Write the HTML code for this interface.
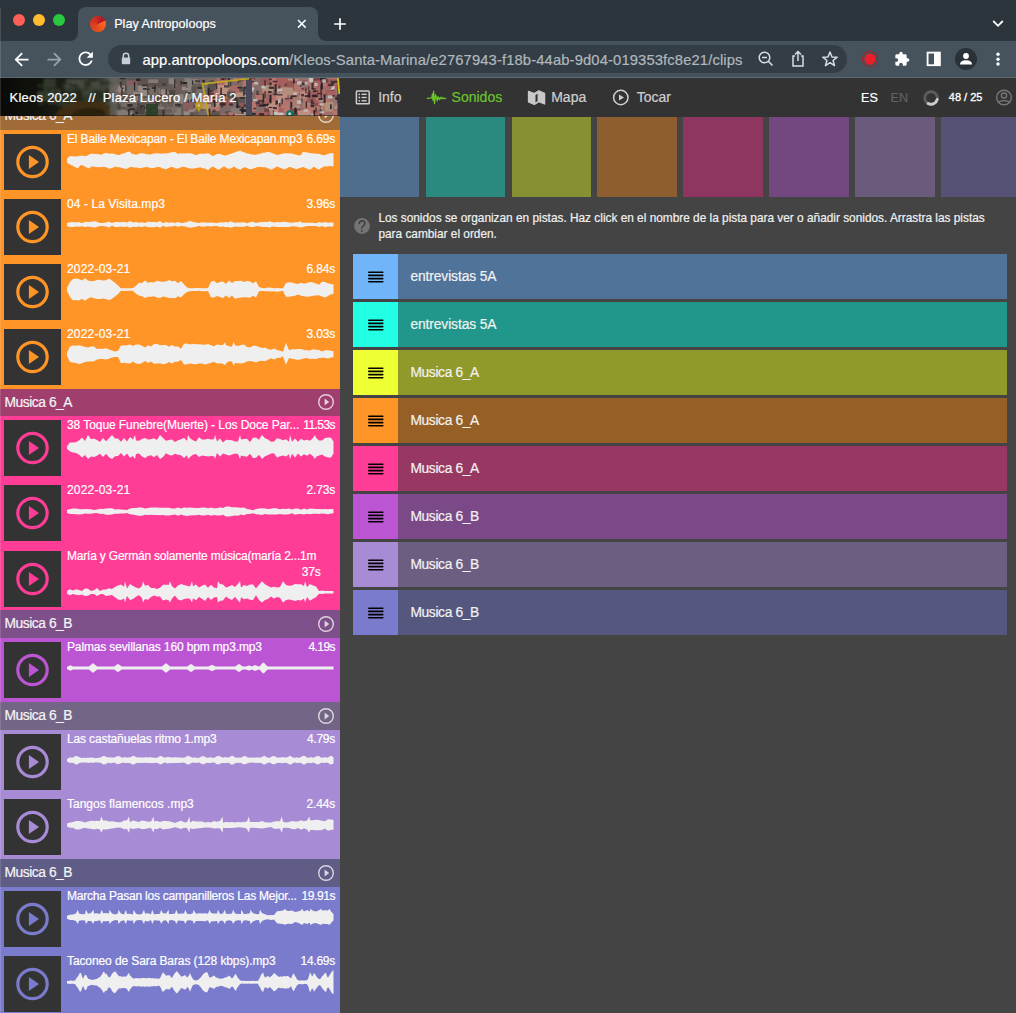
<!DOCTYPE html>
<html><head><meta charset="utf-8">
<style>
*{box-sizing:border-box;margin:0;padding:0}
html,body{width:1016px;height:1013px;overflow:hidden;background:#444;font-family:"Liberation Sans",sans-serif;position:relative;-webkit-font-smoothing:antialiased}
div,span{-webkit-text-stroke:0.2px currentColor}
.abs{position:absolute}
#chrome{position:absolute;left:0;top:0;width:1016px;height:78px;background:#2c353b}
#toolbar{position:absolute;left:0;top:41px;width:1016px;height:36px;background:#46535d}
#tbline{position:absolute;left:0;top:77px;width:1016px;height:1px;background:#5d6a73}
#tab{position:absolute;left:78px;top:7px;width:240px;height:35px;background:#46535d;border-radius:8px 8px 0 0}
.tabflare{position:absolute;top:33px;width:8px;height:8px;background:#46535d}
.tabflare i{position:absolute;left:0;top:0;width:8px;height:8px;background:#2c353b}
#url{position:absolute;left:108px;top:45px;width:739px;height:28px;border-radius:14px;background:#333d45}
#urltext{position:absolute;left:142.6px;top:50.5px;font-size:14.8px;color:#fff;white-space:pre;line-height:18px}
#urltext span{color:#b0b8bd;letter-spacing:0.11px}
.sq{position:absolute;left:4px;width:57px;height:56px;background:#333}
.ct{position:absolute;left:67px;font-size:12px;letter-spacing:-0.17px;color:#fff;white-space:pre;line-height:13px}
.cd{position:absolute;right:5px;font-size:12px;letter-spacing:-0.17px;color:#fff;white-space:pre;line-height:13px}
.sh{position:absolute;left:4.5px;font-size:13.8px;letter-spacing:-0.45px;color:#f4f4f4;white-space:pre}
#nav{position:absolute;left:340px;top:78px;width:676px;height:39px;background:#333}
.nv{position:absolute;top:88.8px;font-size:14px;line-height:16px;color:#cfcfcf;white-space:pre}
.tr{position:absolute;left:353px;width:654px;height:45px}
.th{position:absolute;left:0;top:0;width:45px;height:45px}
.tl{position:absolute;left:57.4px;top:14.6px;font-size:13.8px;letter-spacing:-0.35px;line-height:15px;color:#f2f2f2;white-space:pre}
</style></head><body>
<div id="chrome"></div>
<!-- traffic lights -->
<div class="abs" style="left:13px;top:14px;width:12px;height:12px;border-radius:50%;background:#fe5f57"></div>
<div class="abs" style="left:33px;top:14px;width:12px;height:12px;border-radius:50%;background:#febc2e"></div>
<div class="abs" style="left:53px;top:14px;width:12px;height:12px;border-radius:50%;background:#28c840"></div>
<div id="tab"></div>
<div class="tabflare" style="left:70px"><i style="border-radius:0 0 8px 0"></i></div>
<div class="tabflare" style="left:318px"><i style="border-radius:0 0 0 8px"></i></div>
<div class="abs" style="left:90.2px;top:16.05px;width:15.6px;height:15.6px;border-radius:50%;background:conic-gradient(from 64deg,#ff6620 0deg,#ef5a20 60deg,#e04820 150deg,#d63a20 220deg,#c42622 300deg,#aa1420 360deg)"></div>
<div class="abs" style="left:114.2px;top:16.5px;font-size:12.6px;line-height:15px;color:#fff;white-space:pre">Play Antropoloops</div>
<svg class="abs" style="left:297px;top:19px" width="10" height="10" viewBox="0 0 10 10"><path d="M1 1 L8.6 8.6 M8.6 1 L1 8.6" stroke="#fff" stroke-width="1.5"/></svg>
<svg class="abs" style="left:333px;top:17px" width="14" height="14" viewBox="0 0 14 14"><path d="M7 1.2 V12.8 M1.2 7 H12.8" stroke="#fff" stroke-width="1.7"/></svg>
<svg class="abs" style="left:992px;top:19px" width="12" height="10" viewBox="0 0 12 10"><path d="M1.2 2 L6 6.8 L10.8 2" fill="none" stroke="#fff" stroke-width="1.8"/></svg>
<div id="toolbar"></div>
<div id="tbline"></div>
<!-- nav icons -->
<svg class="abs" style="left:11.4px;top:48.5px" width="21.1" height="21.1" viewBox="0 0 24 24"><path d="M20 11H7.83l5.59-5.59L12 4l-8 8 8 8 1.41-1.41L7.83 13H20v-2z" fill="#fff"/></svg>
<svg class="abs" style="left:43.7px;top:48.5px" width="21.1" height="21.1" viewBox="0 0 24 24"><path d="M12 4l-1.41 1.41L16.17 11H4v2h12.17l-5.58 5.59L12 20l8-8z" fill="#97a2aa"/></svg>
<svg class="abs" style="left:75.4px;top:48.4px" width="21.45" height="21.45" viewBox="0 0 24 24"><path d="M17.65 6.35C16.2 4.9 14.21 4 12 4c-4.42 0-7.99 3.58-7.99 8s3.57 8 7.99 8c3.73 0 6.84-2.55 7.73-6h-2.08c-.82 2.33-3.04 4-5.65 4-3.31 0-6-2.69-6-6s2.69-6 6-6c1.66 0 3.140.69 4.22 1.78L13 11h7V4l-2.35 2.35z" fill="#fff"/></svg>
<div id="url"></div>
<svg class="abs" style="left:121px;top:52px" width="10" height="13" viewBox="0 0 10 13"><path d="M2.3 6 V4 A2.7 2.7 0 0 1 7.7 4 V6" fill="none" stroke="#c7ced3" stroke-width="1.5"/><rect x="0.8" y="5.6" width="8.4" height="6.6" rx="1" fill="#c7ced3"/></svg>
<div id="urltext">app.antropoloops.com<span>/Kleos-Santa-Marina/e2767943-f18b-44ab-9d04-019353fc8e21/clips</span></div>
<svg class="abs" style="left:757px;top:50px" width="18" height="18" viewBox="0 0 18 18"><circle cx="7.5" cy="7.5" r="5.3" fill="none" stroke="#d7dde1" stroke-width="1.5"/><path d="M5 7.5 H10 M11.3 11.3 L15.5 15.5" stroke="#d7dde1" stroke-width="1.6"/></svg>
<svg class="abs" style="left:790px;top:50px" width="16" height="18" viewBox="0 0 16 18"><path d="M5 6 H3 V16 H13 V6 H11" fill="none" stroke="#d7dde1" stroke-width="1.5"/><path d="M8 11 V1.5 M5 4.5 L8 1.5 L11 4.5" fill="none" stroke="#d7dde1" stroke-width="1.5"/></svg>
<svg class="abs" style="left:821px;top:50px" width="18" height="18" viewBox="0 0 18 18"><path d="M9 2 L11 7 L16.2 7.2 L12.1 10.5 L13.5 15.6 L9 12.7 L4.5 15.6 L5.9 10.5 L1.8 7.2 L7 7Z" fill="none" stroke="#d7dde1" stroke-width="1.5" stroke-linejoin="round"/></svg>
<svg class="abs" style="left:861px;top:50px" width="18" height="18" viewBox="0 0 18 18"><circle cx="9" cy="9" r="7.6" fill="none" stroke="#9a2830" stroke-width="1.3"/><circle cx="9" cy="9" r="5.6" fill="#e8202a"/></svg>
<svg class="abs" style="left:893.7px;top:51.3px" width="16" height="16" viewBox="0 0 24 24"><path d="M20.5 11H19V7c0-1.1-.9-2-2-2h-4V3.5C13 2.12 11.880 1 10.5 1S8 2.12 8 3.5V5H4c-1.1 0-1.99.9-1.99 2v3.8H3.5c1.49 0 2.7 1.21 2.7 2.7s-1.21 2.7-2.700 2.7H2V20c0 1.1.9 2 2 2h3.8v-1.5c0-1.49 1.21-2.7 2.7-2.7 1.49 0 2.7 1.21 2.7 2.7V22H17c1.1 0 2-.9 2-2v-4h1.5c1.38 0 2.5-1.12 2.5-2.5S21.88 11 20.5 11z" fill="#fff"/></svg>
<svg class="abs" style="left:926px;top:51px" width="16" height="16" viewBox="0 0 16 16"><rect x="1.6" y="1.6" width="12.3" height="12.6" fill="none" stroke="#fff" stroke-width="1.8"/><rect x="8" y="1.5" width="6" height="12.8" fill="#fff"/></svg>
<div class="abs" style="left:955px;top:48px;width:22px;height:22px;border-radius:50%;background:#2a3238"></div>
<svg class="abs" style="left:958px;top:51px" width="16" height="16" viewBox="0 0 16 16"><circle cx="8" cy="5" r="2.9" fill="#fff"/><path d="M2 13.6 C2 10.2 5 9.3 8 9.3 C11 9.3 14 10.2 14 13.6Z" fill="#fff"/></svg>
<svg class="abs" style="left:994px;top:51px" width="8" height="16" viewBox="0 0 8 16"><circle cx="4" cy="3.3" r="1.7" fill="#fff"/><circle cx="4" cy="8.2" r="1.7" fill="#fff"/><circle cx="4" cy="13" r="1.7" fill="#fff"/></svg>

<!-- page -->
<div class="abs" style="left:0;top:78px;width:340px;height:935px;background:#ff9427;overflow:hidden">
<div class="abs" style="left:0;top:-78px;width:340px;height:1013px">
<div style="position:absolute;left:0;top:101.7px;width:340px;height:27.999999999999986px;background:#a06b36"></div>
<div class="sh" style="top:101.7px;height:27.999999999999986px;line-height:27.999999999999986px">Musica 6_A</div>
<svg style="position:absolute;left:317.4px;top:106.4px" width="18" height="18" viewBox="0 0 18 18"><circle cx="9" cy="9" r="7.3" fill="none" stroke="rgba(255,255,255,0.75)" stroke-width="1.4"/><path d="M7.6 5.6 L12.2 9 L7.6 12.4Z" fill="rgba(255,255,255,0.75)"/></svg>
<div style="position:absolute;left:0;top:129.7px;width:340px;height:259.3px;background:#ff9427"></div>
<div style="position:absolute;left:0;top:389px;width:340px;height:27px;background:#a03f6d"></div>
<div class="sh" style="top:389px;height:27px;line-height:27px">Musica 6_A</div>
<svg style="position:absolute;left:317.4px;top:393.2px" width="18" height="18" viewBox="0 0 18 18"><circle cx="9" cy="9" r="7.3" fill="none" stroke="rgba(255,255,255,0.75)" stroke-width="1.4"/><path d="M7.6 5.6 L12.2 9 L7.6 12.4Z" fill="rgba(255,255,255,0.75)"/></svg>
<div style="position:absolute;left:0;top:416px;width:340px;height:194px;background:#ff3c96"></div>
<div style="position:absolute;left:0;top:610px;width:340px;height:28px;background:#7e5089"></div>
<div class="sh" style="top:610px;height:28px;line-height:28px">Musica 6_B</div>
<svg style="position:absolute;left:317.4px;top:614.7px" width="18" height="18" viewBox="0 0 18 18"><circle cx="9" cy="9" r="7.3" fill="none" stroke="rgba(255,255,255,0.75)" stroke-width="1.4"/><path d="M7.6 5.6 L12.2 9 L7.6 12.4Z" fill="rgba(255,255,255,0.75)"/></svg>
<div style="position:absolute;left:0;top:638px;width:340px;height:64px;background:#bb55d4"></div>
<div style="position:absolute;left:0;top:702px;width:340px;height:28px;background:#736586"></div>
<div class="sh" style="top:702px;height:28px;line-height:28px">Musica 6_B</div>
<svg style="position:absolute;left:317.4px;top:706.7px" width="18" height="18" viewBox="0 0 18 18"><circle cx="9" cy="9" r="7.3" fill="none" stroke="rgba(255,255,255,0.75)" stroke-width="1.4"/><path d="M7.6 5.6 L12.2 9 L7.6 12.4Z" fill="rgba(255,255,255,0.75)"/></svg>
<div style="position:absolute;left:0;top:730px;width:340px;height:129px;background:#a78bd4"></div>
<div style="position:absolute;left:0;top:859px;width:340px;height:28px;background:#5f5d86"></div>
<div class="sh" style="top:859px;height:28px;line-height:28px">Musica 6_B</div>
<svg style="position:absolute;left:317.4px;top:863.7px" width="18" height="18" viewBox="0 0 18 18"><circle cx="9" cy="9" r="7.3" fill="none" stroke="rgba(255,255,255,0.75)" stroke-width="1.4"/><path d="M7.6 5.6 L12.2 9 L7.6 12.4Z" fill="rgba(255,255,255,0.75)"/></svg>
<div style="position:absolute;left:0;top:887px;width:340px;height:126px;background:#7a7bcc"></div>
<div class="sq" style="top:134px"></div>
<svg style="position:absolute;left:14px;top:144px" width="37" height="37" viewBox="0 0 37 37"><circle cx="18.5" cy="18" r="14.7" fill="none" stroke="#ff9427" stroke-width="3.2"/><path d="M14.9 11 L25 18 L14.9 25Z" fill="#ff9427"/></svg>
<div class="ct" style="top:133.1px;letter-spacing:-0.14px">El Baile Mexicapan - El Baile Mexicapan.mp3</div>
<div class="cd" style="top:133.1px;letter-spacing:-0.17px">6.69s</div>
<div class="sq" style="top:199px"></div>
<svg style="position:absolute;left:14px;top:209px" width="37" height="37" viewBox="0 0 37 37"><circle cx="18.5" cy="18" r="14.7" fill="none" stroke="#ff9427" stroke-width="3.2"/><path d="M14.9 11 L25 18 L14.9 25Z" fill="#ff9427"/></svg>
<div class="ct" style="top:198.1px;letter-spacing:0.08px">04 - La Visita.mp3</div>
<div class="cd" style="top:198.1px;letter-spacing:-0.17px">3.96s</div>
<div class="sq" style="top:263.5px"></div>
<svg style="position:absolute;left:14px;top:273.5px" width="37" height="37" viewBox="0 0 37 37"><circle cx="18.5" cy="18" r="14.7" fill="none" stroke="#ff9427" stroke-width="3.2"/><path d="M14.9 11 L25 18 L14.9 25Z" fill="#ff9427"/></svg>
<div class="ct" style="top:262.6px;letter-spacing:0.2px">2022-03-21</div>
<div class="cd" style="top:262.6px;letter-spacing:-0.17px">6.84s</div>
<div class="sq" style="top:328.5px"></div>
<svg style="position:absolute;left:14px;top:338.5px" width="37" height="37" viewBox="0 0 37 37"><circle cx="18.5" cy="18" r="14.7" fill="none" stroke="#ff9427" stroke-width="3.2"/><path d="M14.9 11 L25 18 L14.9 25Z" fill="#ff9427"/></svg>
<div class="ct" style="top:327.6px;letter-spacing:0.2px">2022-03-21</div>
<div class="cd" style="top:327.6px;letter-spacing:-0.17px">3.03s</div>
<div class="sq" style="top:420px"></div>
<svg style="position:absolute;left:14px;top:430px" width="37" height="37" viewBox="0 0 37 37"><circle cx="18.5" cy="18" r="14.7" fill="none" stroke="#ff3c96" stroke-width="3.2"/><path d="M14.9 11 L25 18 L14.9 25Z" fill="#ff3c96"/></svg>
<div class="ct" style="top:419.1px;letter-spacing:-0.07px">38 Toque Funebre(Muerte) - Los Doce Par...</div>
<div class="cd" style="top:419.1px;letter-spacing:-0.55px">11.53s</div>
<div class="sq" style="top:485px"></div>
<svg style="position:absolute;left:14px;top:495px" width="37" height="37" viewBox="0 0 37 37"><circle cx="18.5" cy="18" r="14.7" fill="none" stroke="#ff3c96" stroke-width="3.2"/><path d="M14.9 11 L25 18 L14.9 25Z" fill="#ff3c96"/></svg>
<div class="ct" style="top:484.1px;letter-spacing:0.2px">2022-03-21</div>
<div class="cd" style="top:484.1px;letter-spacing:-0.17px">2.73s</div>
<div class="sq" style="top:550.5px"></div>
<svg style="position:absolute;left:14px;top:560.5px" width="37" height="37" viewBox="0 0 37 37"><circle cx="18.5" cy="18" r="14.7" fill="none" stroke="#ff3c96" stroke-width="3.2"/><path d="M14.9 11 L25 18 L14.9 25Z" fill="#ff3c96"/></svg>
<div class="ct" style="top:549.6px;letter-spacing:-0.2px">María y Germán solamente música(maría 2...1m</div>
<div class="cd" style="top:565.7px;right:19.5px">37s</div>
<div class="sq" style="top:642px"></div>
<svg style="position:absolute;left:14px;top:652px" width="37" height="37" viewBox="0 0 37 37"><circle cx="18.5" cy="18" r="14.7" fill="none" stroke="#bb55d4" stroke-width="3.2"/><path d="M14.9 11 L25 18 L14.9 25Z" fill="#bb55d4"/></svg>
<div class="ct" style="top:641.1px;letter-spacing:-0.14px">Palmas sevillanas 160 bpm mp3.mp3</div>
<div class="cd" style="top:641.1px;letter-spacing:-0.56px">4.19s</div>
<div class="sq" style="top:734px"></div>
<svg style="position:absolute;left:14px;top:744px" width="37" height="37" viewBox="0 0 37 37"><circle cx="18.5" cy="18" r="14.7" fill="none" stroke="#a78bd4" stroke-width="3.2"/><path d="M14.9 11 L25 18 L14.9 25Z" fill="#a78bd4"/></svg>
<div class="ct" style="top:733.1px;letter-spacing:-0.14px">Las castañuelas ritmo 1.mp3</div>
<div class="cd" style="top:733.1px;letter-spacing:-0.28px">4.79s</div>
<div class="sq" style="top:799px"></div>
<svg style="position:absolute;left:14px;top:809px" width="37" height="37" viewBox="0 0 37 37"><circle cx="18.5" cy="18" r="14.7" fill="none" stroke="#a78bd4" stroke-width="3.2"/><path d="M14.9 11 L25 18 L14.9 25Z" fill="#a78bd4"/></svg>
<div class="ct" style="top:798.1px;letter-spacing:0.0px">Tangos flamencos .mp3</div>
<div class="cd" style="top:798.1px;letter-spacing:-0.17px">2.44s</div>
<div class="sq" style="top:891px"></div>
<svg style="position:absolute;left:14px;top:901px" width="37" height="37" viewBox="0 0 37 37"><circle cx="18.5" cy="18" r="14.7" fill="none" stroke="#7a7bcc" stroke-width="3.2"/><path d="M14.9 11 L25 18 L14.9 25Z" fill="#7a7bcc"/></svg>
<div class="ct" style="top:890.1px;letter-spacing:-0.21px">Marcha Pasan los campanilleros Las Mejor...</div>
<div class="cd" style="top:890.1px;letter-spacing:-0.42px">19.91s</div>
<div class="sq" style="top:956px"></div>
<svg style="position:absolute;left:14px;top:966px" width="37" height="37" viewBox="0 0 37 37"><circle cx="18.5" cy="18" r="14.7" fill="none" stroke="#7a7bcc" stroke-width="3.2"/><path d="M14.9 11 L25 18 L14.9 25Z" fill="#7a7bcc"/></svg>
<div class="ct" style="top:955.1px;letter-spacing:-0.1px">Taconeo de Sara Baras (128 kbps).mp3</div>
<div class="cd" style="top:955.1px;letter-spacing:-0.25px">14.69s</div>
<svg style="position:absolute;left:0;top:0" width="340" height="1013" viewBox="0 0 340 1013"><g fill="#efefef"><path d="M67.0 159.0 L68.0 157.4 L69.0 156.7 L70.0 156.3 L71.0 156.0 L72.0 156.0 L73.0 156.4 L74.0 156.3 L75.0 156.5 L76.0 156.6 L77.0 156.3 L78.0 156.2 L79.0 155.9 L80.0 155.7 L81.0 155.8 L82.0 155.6 L83.0 155.9 L84.0 155.7 L85.0 156.2 L86.0 156.1 L87.0 155.6 L88.0 155.3 L89.0 154.6 L90.0 154.0 L91.0 153.8 L92.0 154.0 L93.0 153.6 L94.0 154.0 L95.0 153.8 L96.0 154.2 L97.0 154.1 L98.0 154.3 L99.0 154.2 L100.0 154.6 L101.0 154.8 L102.0 154.5 L103.0 154.0 L104.0 153.3 L105.0 152.9 L106.0 153.3 L107.0 153.0 L108.0 153.5 L109.0 153.5 L110.0 153.7 L111.0 153.4 L112.0 153.4 L113.0 153.6 L114.0 153.9 L115.0 154.3 L116.0 154.4 L117.0 154.7 L118.0 154.9 L119.0 155.1 L120.0 154.8 L121.0 154.1 L122.0 153.9 L123.0 153.6 L124.0 153.4 L125.0 152.9 L126.0 152.4 L127.0 152.0 L128.0 151.7 L129.0 151.6 L130.0 152.0 L131.0 152.8 L132.0 153.9 L133.0 154.0 L134.0 154.2 L135.0 154.5 L136.0 154.7 L137.0 154.4 L138.0 154.2 L139.0 153.6 L140.0 153.5 L141.0 153.3 L142.0 153.2 L143.0 153.5 L144.0 153.6 L145.0 153.8 L146.0 154.1 L147.0 154.5 L148.0 154.1 L149.0 154.6 L150.0 154.7 L151.0 154.3 L152.0 154.0 L153.0 153.8 L154.0 153.4 L155.0 153.3 L156.0 153.3 L157.0 153.5 L158.0 153.2 L159.0 153.4 L160.0 153.5 L161.0 153.7 L162.0 153.6 L163.0 153.5 L164.0 153.5 L165.0 153.6 L166.0 153.4 L167.0 153.0 L168.0 153.4 L169.0 152.7 L170.0 152.7 L171.0 152.4 L172.0 151.9 L173.0 152.2 L174.0 152.0 L175.0 152.1 L176.0 152.6 L177.0 153.5 L178.0 153.7 L179.0 153.6 L180.0 153.6 L181.0 153.5 L182.0 153.5 L183.0 153.5 L184.0 153.3 L185.0 153.5 L186.0 153.3 L187.0 153.5 L188.0 153.1 L189.0 153.3 L190.0 153.4 L191.0 153.6 L192.0 153.6 L193.0 154.3 L194.0 154.2 L195.0 154.7 L196.0 155.3 L197.0 154.8 L198.0 154.4 L199.0 154.1 L200.0 153.7 L201.0 153.7 L202.0 153.4 L203.0 153.7 L204.0 153.7 L205.0 153.7 L206.0 153.5 L207.0 153.4 L208.0 153.0 L209.0 153.7 L210.0 154.4 L211.0 154.8 L212.0 155.7 L213.0 156.1 L214.0 155.6 L215.0 155.1 L216.0 154.7 L217.0 153.9 L218.0 153.8 L219.0 153.9 L220.0 153.9 L221.0 154.3 L222.0 154.7 L223.0 155.0 L224.0 155.2 L225.0 155.4 L226.0 155.5 L227.0 155.0 L228.0 154.8 L229.0 154.5 L230.0 154.0 L231.0 153.8 L232.0 153.3 L233.0 152.9 L234.0 152.8 L235.0 152.3 L236.0 151.7 L237.0 151.7 L238.0 151.1 L239.0 150.9 L240.0 150.6 L241.0 150.9 L242.0 151.4 L243.0 152.2 L244.0 152.1 L245.0 152.5 L246.0 153.2 L247.0 153.6 L248.0 153.6 L249.0 153.8 L250.0 154.1 L251.0 154.3 L252.0 154.4 L253.0 154.5 L254.0 154.6 L255.0 154.9 L256.0 154.7 L257.0 154.4 L258.0 154.1 L259.0 154.2 L260.0 153.8 L261.0 153.6 L262.0 153.3 L263.0 153.0 L264.0 152.6 L265.0 152.7 L266.0 152.5 L267.0 152.1 L268.0 151.9 L269.0 151.9 L270.0 152.3 L271.0 152.5 L272.0 152.9 L273.0 153.6 L274.0 153.9 L275.0 154.2 L276.0 154.6 L277.0 155.1 L278.0 154.8 L279.0 154.7 L280.0 154.3 L281.0 154.1 L282.0 154.1 L283.0 153.4 L284.0 153.2 L285.0 153.3 L286.0 153.2 L287.0 153.2 L288.0 153.5 L289.0 153.3 L290.0 153.3 L291.0 153.7 L292.0 153.5 L293.0 153.8 L294.0 154.4 L295.0 154.3 L296.0 154.6 L297.0 154.9 L298.0 155.1 L299.0 155.5 L300.0 155.5 L301.0 155.1 L302.0 153.2 L303.0 151.6 L304.0 152.3 L305.0 151.9 L306.0 152.3 L307.0 152.5 L308.0 152.5 L309.0 152.9 L310.0 153.1 L311.0 153.3 L312.0 153.3 L313.0 153.6 L314.0 153.4 L315.0 153.5 L316.0 153.8 L317.0 153.5 L318.0 154.0 L319.0 153.8 L320.0 154.3 L321.0 154.5 L322.0 154.9 L323.0 155.1 L324.0 155.6 L325.0 155.0 L326.0 154.7 L327.0 154.2 L328.0 153.9 L329.0 153.6 L330.0 153.3 L331.0 153.2 L332.0 153.4 L333.0 153.0 L333.5 153.3 L333.5 166.3 L333.0 166.5 L332.0 166.1 L331.0 166.3 L330.0 166.1 L329.0 166.2 L328.0 166.6 L327.0 166.6 L326.0 166.3 L325.0 166.4 L324.0 166.4 L323.0 167.1 L322.0 167.7 L321.0 168.1 L320.0 169.0 L319.0 169.7 L318.0 169.1 L317.0 168.9 L316.0 167.8 L315.0 167.6 L314.0 166.7 L313.0 167.3 L312.0 168.3 L311.0 169.0 L310.0 169.6 L309.0 169.4 L308.0 169.1 L307.0 168.5 L306.0 168.3 L305.0 167.9 L304.0 167.1 L303.0 167.1 L302.0 167.5 L301.0 167.4 L300.0 168.0 L299.0 168.0 L298.0 168.8 L297.0 169.0 L296.0 169.2 L295.0 168.8 L294.0 168.1 L293.0 168.2 L292.0 167.6 L291.0 167.2 L290.0 167.0 L289.0 167.3 L288.0 167.5 L287.0 168.3 L286.0 168.7 L285.0 168.9 L284.0 169.5 L283.0 168.9 L282.0 168.2 L281.0 168.2 L280.0 167.8 L279.0 167.3 L278.0 166.7 L277.0 166.6 L276.0 167.2 L275.0 167.6 L274.0 168.2 L273.0 168.8 L272.0 169.5 L271.0 169.7 L270.0 169.0 L269.0 168.6 L268.0 168.5 L267.0 168.2 L266.0 167.5 L265.0 167.1 L264.0 167.4 L263.0 167.3 L262.0 167.0 L261.0 167.0 L260.0 166.9 L259.0 166.9 L258.0 167.0 L257.0 167.2 L256.0 167.4 L255.0 167.9 L254.0 168.3 L253.0 168.4 L252.0 168.9 L251.0 168.9 L250.0 169.2 L249.0 169.1 L248.0 168.5 L247.0 168.0 L246.0 167.4 L245.0 166.9 L244.0 167.7 L243.0 167.8 L242.0 168.6 L241.0 169.3 L240.0 169.8 L239.0 169.3 L238.0 169.1 L237.0 168.4 L236.0 167.9 L235.0 167.3 L234.0 166.6 L233.0 167.2 L232.0 167.8 L231.0 168.2 L230.0 168.6 L229.0 169.1 L228.0 168.5 L227.0 168.3 L226.0 167.6 L225.0 166.9 L224.0 166.3 L223.0 167.1 L222.0 167.5 L221.0 168.3 L220.0 168.9 L219.0 169.2 L218.0 169.6 L217.0 169.3 L216.0 168.0 L215.0 168.0 L214.0 166.9 L213.0 166.5 L212.0 166.8 L211.0 167.7 L210.0 168.1 L209.0 169.4 L208.0 170.0 L207.0 169.4 L206.0 168.9 L205.0 168.6 L204.0 168.5 L203.0 168.0 L202.0 168.2 L201.0 167.6 L200.0 167.3 L199.0 167.4 L198.0 167.7 L197.0 168.0 L196.0 168.0 L195.0 168.2 L194.0 168.5 L193.0 168.4 L192.0 168.6 L191.0 168.5 L190.0 168.5 L189.0 168.2 L188.0 168.1 L187.0 167.6 L186.0 167.4 L185.0 167.0 L184.0 166.9 L183.0 166.8 L182.0 167.0 L181.0 167.2 L180.0 167.8 L179.0 168.2 L178.0 168.5 L177.0 168.4 L176.0 168.4 L175.0 168.3 L174.0 167.6 L173.0 167.3 L172.0 167.2 L171.0 166.8 L170.0 167.4 L169.0 168.0 L168.0 168.1 L167.0 169.1 L166.0 169.2 L165.0 169.0 L164.0 168.5 L163.0 168.6 L162.0 168.2 L161.0 167.4 L160.0 167.2 L159.0 167.1 L158.0 166.9 L157.0 166.9 L156.0 167.5 L155.0 167.5 L154.0 167.9 L153.0 168.1 L152.0 168.3 L151.0 168.2 L150.0 167.6 L149.0 167.4 L148.0 167.4 L147.0 166.7 L146.0 167.0 L145.0 167.3 L144.0 167.5 L143.0 167.6 L142.0 168.1 L141.0 168.2 L140.0 167.9 L139.0 168.3 L138.0 167.7 L137.0 167.5 L136.0 167.4 L135.0 167.5 L134.0 167.4 L133.0 167.2 L132.0 166.9 L131.0 166.8 L130.0 167.4 L129.0 167.6 L128.0 168.3 L127.0 168.8 L126.0 169.1 L125.0 168.7 L124.0 168.5 L123.0 168.3 L122.0 168.1 L121.0 167.6 L120.0 167.4 L119.0 167.0 L118.0 167.4 L117.0 166.9 L116.0 166.8 L115.0 166.8 L114.0 167.3 L113.0 167.7 L112.0 167.9 L111.0 168.3 L110.0 168.4 L109.0 168.5 L108.0 168.2 L107.0 167.8 L106.0 167.1 L105.0 167.1 L104.0 167.2 L103.0 166.8 L102.0 166.9 L101.0 167.0 L100.0 167.3 L99.0 167.3 L98.0 167.0 L97.0 167.2 L96.0 166.9 L95.0 166.9 L94.0 166.6 L93.0 166.7 L92.0 166.3 L91.0 167.0 L90.0 167.7 L89.0 168.4 L88.0 167.8 L87.0 167.8 L86.0 167.0 L85.0 166.3 L84.0 166.3 L83.0 165.4 L82.0 165.3 L81.0 165.0 L80.0 165.8 L79.0 166.9 L78.0 168.0 L77.0 167.9 L76.0 167.5 L75.0 166.9 L74.0 166.4 L73.0 165.7 L72.0 165.6 L71.0 165.1 L70.0 164.3 L69.0 164.0 L68.0 163.5 L67.0 162.0Z"/><path d="M67.0 223.0 L70.0 222.3 L73.0 221.9 L76.0 222.5 L79.0 222.0 L82.0 223.3 L85.0 221.8 L88.0 222.0 L91.0 221.7 L94.0 221.6 L95.0 220.9 L97.0 222.1 L100.0 222.9 L103.0 222.9 L106.0 222.5 L109.0 221.8 L112.0 223.1 L115.0 222.1 L118.0 222.1 L121.0 222.2 L124.0 221.7 L127.0 222.6 L130.0 220.9 L133.0 222.6 L136.0 222.0 L139.0 222.8 L142.0 222.2 L145.0 223.1 L148.0 221.7 L151.0 221.9 L154.0 222.0 L157.0 222.3 L160.0 220.9 L163.0 223.2 L166.0 222.0 L169.0 222.7 L172.0 222.3 L175.0 222.9 L178.0 221.9 L181.0 223.1 L184.0 222.8 L187.0 222.0 L190.0 220.9 L193.0 222.1 L196.0 222.4 L199.0 223.0 L202.0 222.2 L205.0 222.6 L208.0 222.7 L211.0 222.4 L214.0 222.8 L217.0 222.9 L220.0 222.3 L223.0 222.6 L226.0 221.9 L229.0 222.4 L230.0 220.9 L232.0 222.0 L235.0 222.7 L238.0 222.5 L241.0 222.5 L244.0 222.3 L247.0 223.3 L250.0 222.3 L253.0 221.8 L256.0 222.9 L259.0 222.3 L262.0 222.1 L265.0 222.0 L268.0 222.1 L270.0 220.9 L271.0 222.0 L274.0 222.4 L277.0 222.1 L280.0 222.3 L283.0 221.8 L286.0 222.0 L289.0 222.4 L292.0 222.8 L295.0 222.2 L298.0 222.3 L300.0 220.9 L301.0 222.2 L304.0 222.7 L307.0 222.8 L310.0 222.8 L313.0 222.7 L316.0 223.3 L319.0 222.1 L322.0 222.8 L325.0 222.1 L328.0 222.8 L331.0 222.4 L333.5 222.4 L333.5 226.4 L331.0 226.6 L328.0 226.6 L325.0 227.2 L322.0 226.1 L319.0 226.9 L316.0 225.9 L313.0 225.9 L310.0 226.1 L307.0 226.0 L304.0 226.8 L301.0 227.3 L300.0 227.8 L298.0 226.7 L295.0 226.6 L292.0 226.3 L289.0 226.9 L286.0 227.0 L283.0 227.0 L280.0 227.1 L277.0 227.1 L274.0 226.5 L271.0 226.7 L270.0 227.8 L268.0 226.9 L265.0 227.1 L262.0 226.9 L259.0 226.3 L256.0 226.3 L253.0 227.0 L250.0 226.9 L247.0 225.8 L244.0 226.7 L241.0 226.8 L238.0 226.8 L235.0 226.5 L232.0 227.2 L230.0 227.8 L229.0 226.7 L226.0 227.2 L223.0 226.4 L220.0 227.1 L217.0 225.9 L214.0 226.0 L211.0 226.5 L208.0 226.0 L205.0 226.4 L202.0 226.7 L199.0 225.8 L196.0 226.8 L193.0 227.2 L190.0 227.8 L187.0 227.0 L184.0 226.2 L181.0 226.0 L178.0 226.8 L175.0 225.7 L172.0 226.5 L169.0 226.5 L166.0 227.1 L163.0 225.7 L160.0 227.8 L157.0 226.5 L154.0 227.3 L151.0 227.2 L148.0 226.9 L145.0 226.2 L142.0 227.0 L139.0 226.4 L136.0 227.0 L133.0 226.7 L130.0 227.8 L127.0 226.6 L124.0 227.1 L121.0 226.6 L118.0 227.0 L115.0 226.9 L112.0 225.8 L109.0 227.4 L106.0 226.4 L103.0 226.1 L100.0 226.1 L97.0 226.7 L95.0 227.8 L94.0 227.3 L91.0 227.1 L88.0 226.5 L85.0 227.0 L82.0 226.2 L79.0 226.8 L76.0 226.6 L73.0 227.0 L70.0 227.0 L67.0 226.0Z"/><path d="M67.0 288.0 L70.0 282.1 L73.0 279.0 L76.0 278.6 L79.0 279.1 L82.0 280.6 L85.0 278.2 L88.0 280.5 L91.0 281.2 L94.0 281.1 L97.0 280.0 L100.0 279.7 L103.0 280.6 L106.0 280.3 L109.0 278.5 L112.0 280.6 L115.0 282.7 L118.0 285.5 L121.0 288.3 L124.0 288.3 L127.0 288.3 L130.0 288.3 L133.0 287.9 L136.0 285.8 L139.0 282.8 L142.0 283.1 L145.0 280.5 L148.0 282.8 L151.0 281.9 L154.0 282.6 L157.0 280.7 L160.0 281.5 L163.0 281.8 L166.0 281.6 L169.0 280.1 L172.0 281.3 L175.0 280.7 L178.0 283.2 L181.0 280.9 L184.0 284.3 L187.0 287.5 L190.0 288.2 L193.0 288.3 L196.0 288.1 L199.0 288.0 L202.0 288.3 L205.0 288.3 L208.0 288.1 L211.0 281.7 L214.0 280.7 L217.0 283.2 L220.0 282.1 L223.0 281.5 L226.0 283.9 L229.0 280.6 L232.0 282.9 L235.0 281.0 L238.0 280.9 L241.0 280.8 L244.0 282.1 L247.0 281.1 L250.0 281.6 L253.0 283.3 L256.0 281.2 L259.0 287.0 L262.0 288.1 L265.0 288.3 L268.0 287.5 L271.0 287.7 L274.0 288.3 L277.0 288.1 L280.0 288.3 L283.0 288.3 L286.0 283.0 L289.0 282.3 L292.0 282.4 L295.0 283.4 L298.0 284.1 L301.0 282.8 L304.0 283.8 L307.0 282.9 L310.0 282.1 L313.0 282.6 L316.0 283.4 L319.0 284.7 L322.0 281.8 L325.0 282.0 L328.0 283.2 L331.0 284.0 L333.5 284.6 L333.5 293.9 L331.0 294.3 L328.0 295.9 L325.0 297.5 L322.0 296.4 L319.0 295.3 L316.0 295.4 L313.0 295.7 L310.0 296.4 L307.0 296.7 L304.0 296.2 L301.0 295.8 L298.0 294.4 L295.0 295.8 L292.0 296.3 L289.0 296.7 L286.0 296.7 L283.0 290.7 L280.0 291.3 L277.0 291.7 L274.0 291.2 L271.0 291.5 L268.0 291.2 L265.0 291.3 L262.0 290.9 L259.0 291.2 L256.0 297.5 L253.0 295.7 L250.0 297.7 L247.0 297.3 L244.0 297.3 L241.0 297.5 L238.0 298.0 L235.0 298.7 L232.0 295.6 L229.0 297.9 L226.0 295.6 L223.0 298.0 L220.0 297.0 L217.0 295.9 L214.0 297.4 L211.0 297.4 L208.0 291.0 L205.0 291.2 L202.0 291.3 L199.0 290.7 L196.0 290.9 L193.0 291.0 L190.0 291.3 L187.0 292.0 L184.0 294.2 L181.0 297.6 L178.0 296.2 L175.0 298.2 L172.0 298.1 L169.0 297.9 L166.0 297.1 L163.0 296.6 L160.0 298.1 L157.0 297.6 L154.0 296.3 L151.0 296.8 L148.0 296.7 L145.0 298.1 L142.0 296.3 L139.0 295.5 L136.0 293.7 L133.0 290.8 L130.0 290.7 L127.0 290.8 L124.0 291.1 L121.0 290.7 L118.0 293.9 L115.0 296.5 L112.0 298.8 L109.0 300.3 L106.0 298.9 L103.0 298.6 L100.0 299.1 L97.0 298.9 L94.0 298.2 L91.0 297.2 L88.0 298.4 L85.0 300.7 L82.0 298.7 L79.0 300.4 L76.0 300.0 L73.0 300.6 L70.0 297.0 L67.0 291.0Z"/><path d="M67.0 352.7 L70.0 346.4 L73.0 345.4 L76.0 345.8 L79.0 345.2 L82.0 345.9 L85.0 347.0 L88.0 347.4 L91.0 346.6 L94.0 346.4 L97.0 349.0 L100.0 348.8 L103.0 348.8 L106.0 348.3 L109.0 349.4 L112.0 350.5 L115.0 351.5 L118.0 350.7 L121.0 345.6 L124.0 345.6 L127.0 345.3 L130.0 344.6 L133.0 346.0 L136.0 344.6 L139.0 344.6 L142.0 345.8 L145.0 347.4 L148.0 345.2 L151.0 346.6 L154.0 344.1 L157.0 344.1 L160.0 345.2 L163.0 344.9 L166.0 345.1 L169.0 346.8 L172.0 345.0 L175.0 346.4 L178.0 346.6 L181.0 348.7 L184.0 343.7 L187.0 343.6 L190.0 344.6 L193.0 343.8 L196.0 344.3 L199.0 344.2 L202.0 344.6 L205.0 344.7 L208.0 344.0 L211.0 345.2 L214.0 346.2 L217.0 344.6 L220.0 345.1 L223.0 345.0 L225.0 342.2 L226.0 345.1 L229.0 346.2 L232.0 346.7 L233.6 341.7 L235.0 345.2 L238.0 345.9 L241.0 344.9 L244.0 344.5 L247.0 346.9 L250.0 347.4 L253.0 345.8 L256.0 345.7 L259.0 347.0 L262.0 348.1 L265.0 347.4 L268.0 349.0 L271.0 349.8 L274.0 348.6 L277.0 349.9 L280.0 350.7 L283.0 351.7 L286.0 342.7 L289.0 350.2 L292.0 349.3 L295.0 349.2 L298.0 348.9 L301.0 349.0 L304.0 350.0 L307.0 350.3 L310.0 350.4 L313.0 349.2 L316.0 349.7 L319.0 350.1 L322.0 351.4 L325.0 350.2 L328.0 350.3 L331.0 350.8 L333.5 351.3 L333.5 357.1 L331.0 357.6 L328.0 358.4 L325.0 357.7 L322.0 357.8 L319.0 358.0 L316.0 358.9 L313.0 358.8 L310.0 358.9 L307.0 357.9 L304.0 358.6 L301.0 359.3 L298.0 359.9 L295.0 359.3 L292.0 358.8 L289.0 358.1 L286.0 364.8 L283.0 356.5 L280.0 357.7 L277.0 358.1 L274.0 359.4 L271.0 358.3 L268.0 359.7 L265.0 361.2 L262.0 360.8 L259.0 360.9 L256.0 362.5 L253.0 361.5 L250.0 361.1 L247.0 361.5 L244.0 363.0 L241.0 363.5 L238.0 363.3 L235.0 362.9 L233.6 365.7 L232.0 361.5 L229.0 361.2 L226.0 363.2 L225.0 365.2 L223.0 363.7 L220.0 363.2 L217.0 363.6 L214.0 362.1 L211.0 362.8 L208.0 363.8 L205.0 364.4 L202.0 363.4 L199.0 363.6 L196.0 364.2 L193.0 363.9 L190.0 363.6 L187.0 364.3 L184.0 364.4 L181.0 359.9 L178.0 361.8 L175.0 361.7 L172.0 363.4 L169.0 362.1 L166.0 363.7 L163.0 364.2 L160.0 363.3 L157.0 363.6 L154.0 363.8 L151.0 361.4 L148.0 363.0 L145.0 361.1 L142.0 362.9 L139.0 364.1 L136.0 363.6 L133.0 361.4 L130.0 363.5 L127.0 363.3 L124.0 362.7 L121.0 363.3 L118.0 356.9 L115.0 357.1 L112.0 357.5 L109.0 358.7 L106.0 359.6 L103.0 359.1 L100.0 358.9 L97.0 359.6 L94.0 361.3 L91.0 361.5 L88.0 361.6 L85.0 361.9 L82.0 363.2 L79.0 364.1 L76.0 363.1 L73.0 362.6 L70.0 362.0 L67.0 355.7Z"/><path d="M67.0 446.3 L70.0 442.4 L73.0 442.6 L76.0 442.2 L79.0 440.4 L82.0 437.6 L85.0 441.0 L88.0 435.0 L91.0 439.2 L94.0 438.4 L97.0 439.9 L100.0 441.9 L103.0 437.9 L106.0 441.3 L109.0 438.2 L112.0 435.0 L115.0 438.5 L118.0 438.6 L121.0 441.7 L124.0 437.9 L127.0 441.5 L130.0 437.1 L133.0 439.4 L135.0 435.0 L136.0 440.6 L139.0 440.7 L142.0 439.1 L145.0 438.1 L148.0 439.4 L151.0 439.3 L154.0 438.2 L157.0 439.9 L160.0 435.0 L163.0 437.9 L166.0 440.7 L169.0 440.1 L172.0 439.6 L175.0 442.0 L178.0 440.2 L181.0 439.3 L184.0 438.0 L187.0 440.7 L188.0 435.0 L190.0 438.2 L193.0 440.2 L196.0 441.4 L199.0 437.2 L202.0 439.4 L205.0 439.4 L208.0 438.8 L211.0 439.6 L214.0 439.3 L215.0 435.0 L217.0 441.6 L220.0 438.6 L223.0 442.4 L226.0 439.7 L229.0 440.1 L232.0 440.3 L235.0 441.5 L238.0 441.6 L240.0 435.0 L241.0 439.4 L244.0 439.0 L247.0 438.8 L250.0 442.0 L253.0 437.7 L256.0 437.6 L259.0 439.7 L262.0 435.0 L265.0 438.2 L268.0 439.4 L271.0 441.7 L274.0 441.6 L277.0 438.3 L280.0 438.9 L283.0 440.2 L286.0 439.2 L289.0 441.7 L290.0 435.0 L292.0 441.8 L295.0 438.4 L298.0 441.7 L301.0 438.7 L304.0 440.5 L307.0 439.8 L310.0 440.7 L313.0 438.0 L315.0 435.0 L316.0 437.8 L319.0 440.4 L322.0 440.4 L325.0 438.1 L328.0 437.6 L331.0 437.8 L333.5 441.5 L333.5 453.5 L331.0 457.4 L328.0 457.5 L325.0 456.6 L322.0 454.6 L319.0 455.4 L316.0 456.7 L315.0 459.0 L313.0 456.3 L310.0 453.7 L307.0 455.7 L304.0 454.2 L301.0 456.5 L298.0 453.5 L295.0 457.5 L292.0 453.8 L290.0 459.0 L289.0 454.2 L286.0 456.6 L283.0 455.5 L280.0 456.2 L277.0 457.4 L274.0 453.3 L271.0 453.4 L268.0 454.9 L265.0 456.3 L262.0 459.0 L259.0 454.8 L256.0 457.8 L253.0 458.0 L250.0 453.8 L247.0 456.8 L244.0 456.2 L241.0 455.6 L240.0 459.0 L238.0 453.9 L235.0 453.4 L232.0 454.4 L229.0 455.4 L226.0 454.5 L223.0 453.6 L220.0 456.6 L217.0 453.1 L215.0 459.0 L214.0 456.3 L211.0 455.9 L208.0 456.6 L205.0 455.9 L202.0 455.4 L199.0 457.1 L196.0 454.0 L193.0 454.7 L190.0 457.1 L188.0 459.0 L187.0 455.2 L184.0 457.9 L181.0 455.2 L178.0 454.8 L175.0 453.7 L172.0 455.6 L169.0 455.0 L166.0 453.2 L163.0 457.1 L160.0 459.0 L157.0 455.0 L154.0 457.2 L151.0 455.2 L148.0 455.9 L145.0 457.9 L142.0 456.5 L139.0 453.4 L136.0 454.1 L135.0 459.0 L133.0 456.1 L130.0 457.8 L127.0 453.6 L124.0 456.5 L121.0 453.1 L118.0 456.0 L115.0 456.2 L112.0 459.0 L109.0 457.3 L106.0 453.8 L103.0 457.1 L100.0 453.7 L97.0 455.7 L94.0 457.1 L91.0 456.4 L88.0 459.0 L85.0 454.9 L82.0 457.5 L79.0 454.6 L76.0 452.9 L73.0 452.6 L70.0 451.5 L67.0 448.7Z"/><path d="M67.0 510.0 L70.0 509.1 L73.0 508.5 L76.0 508.6 L79.0 508.9 L82.0 509.3 L85.0 509.0 L88.0 508.9 L91.0 509.3 L94.0 509.9 L97.0 509.5 L100.0 508.8 L103.0 508.9 L106.0 508.4 L109.0 508.2 L112.0 508.3 L115.0 509.5 L118.0 509.2 L121.0 509.5 L124.0 509.7 L127.0 510.1 L130.0 508.6 L133.0 507.9 L136.0 507.9 L139.0 507.4 L142.0 507.4 L145.0 508.6 L148.0 507.9 L151.0 507.6 L154.0 507.6 L157.0 507.6 L160.0 507.8 L163.0 507.8 L166.0 507.7 L169.0 507.8 L172.0 508.6 L175.0 508.5 L178.0 507.4 L181.0 508.6 L184.0 507.5 L187.0 507.8 L190.0 507.6 L193.0 507.7 L196.0 508.1 L199.0 507.9 L202.0 507.5 L205.0 507.5 L208.0 508.2 L211.0 507.5 L214.0 508.2 L217.0 508.3 L220.0 507.2 L223.0 508.0 L226.0 506.6 L229.0 506.6 L232.0 507.2 L235.0 507.3 L238.0 507.5 L241.0 507.8 L244.0 507.6 L247.0 509.1 L250.0 509.4 L253.0 510.3 L256.0 509.0 L259.0 508.4 L262.0 508.3 L265.0 508.6 L268.0 509.1 L271.0 508.7 L274.0 508.1 L277.0 508.5 L280.0 509.3 L283.0 508.8 L286.0 509.1 L289.0 508.5 L292.0 509.6 L295.0 508.6 L298.0 508.5 L301.0 509.7 L304.0 508.6 L307.0 509.5 L310.0 508.4 L313.0 508.7 L316.0 509.1 L319.0 508.9 L322.0 509.3 L325.0 509.0 L328.0 509.2 L331.0 509.0 L333.5 509.2 L333.5 513.3 L331.0 513.5 L328.0 514.3 L325.0 513.8 L322.0 513.4 L319.0 514.0 L316.0 513.7 L313.0 513.8 L310.0 514.3 L307.0 513.8 L304.0 514.4 L301.0 513.9 L298.0 513.9 L295.0 514.8 L292.0 513.3 L289.0 514.3 L286.0 514.6 L283.0 514.4 L280.0 514.0 L277.0 514.4 L274.0 514.6 L271.0 514.5 L268.0 514.5 L265.0 514.1 L262.0 515.1 L259.0 514.6 L256.0 514.2 L253.0 513.3 L250.0 513.9 L247.0 514.0 L244.0 515.3 L241.0 514.6 L238.0 515.8 L235.0 515.4 L232.0 515.9 L229.0 516.4 L226.0 516.4 L223.0 514.7 L220.0 515.4 L217.0 515.4 L214.0 515.0 L211.0 515.7 L208.0 514.8 L205.0 515.4 L202.0 515.4 L199.0 514.8 L196.0 515.3 L193.0 515.2 L190.0 515.4 L187.0 516.0 L184.0 515.4 L181.0 514.6 L178.0 515.8 L175.0 514.4 L172.0 515.0 L169.0 515.5 L166.0 515.5 L163.0 514.9 L160.0 515.3 L157.0 515.1 L154.0 515.1 L151.0 514.8 L148.0 515.0 L145.0 514.8 L142.0 515.8 L139.0 515.8 L136.0 515.2 L133.0 514.6 L130.0 514.3 L127.0 512.9 L124.0 513.4 L121.0 513.5 L118.0 513.7 L115.0 513.7 L112.0 514.4 L109.0 514.8 L106.0 514.8 L103.0 513.8 L100.0 514.1 L97.0 512.9 L94.0 513.2 L91.0 513.7 L88.0 513.8 L85.0 513.5 L82.0 514.2 L79.0 514.5 L76.0 514.2 L73.0 514.0 L70.0 514.1 L67.0 513.0Z"/><path d="M67.0 590.8 L70.0 589.2 L73.0 590.6 L76.0 589.3 L79.0 589.9 L82.0 590.9 L85.0 588.5 L88.0 588.7 L91.0 591.1 L94.0 590.3 L97.0 588.1 L100.0 591.1 L103.0 589.6 L106.0 589.5 L109.0 588.3 L112.0 588.9 L115.0 586.9 L118.0 585.6 L121.0 584.6 L124.0 586.7 L125.0 581.3 L127.0 588.4 L130.0 584.0 L133.0 586.1 L136.0 587.5 L139.0 588.5 L142.0 586.1 L143.0 581.3 L145.0 585.8 L148.0 585.0 L151.0 587.9 L154.0 588.1 L157.0 589.0 L160.0 587.7 L163.0 584.8 L166.0 584.7 L169.0 584.7 L170.0 581.3 L172.0 586.2 L175.0 588.5 L178.0 585.4 L181.0 583.9 L184.0 585.0 L187.0 585.8 L190.0 586.6 L192.0 581.3 L193.0 586.3 L196.0 584.4 L199.0 587.4 L202.0 585.8 L205.0 584.4 L208.0 587.8 L211.0 584.8 L214.0 587.5 L217.0 588.2 L218.0 581.3 L220.0 584.0 L223.0 584.4 L226.0 587.6 L229.0 586.4 L232.0 584.9 L235.0 587.1 L238.0 583.7 L240.0 581.3 L241.0 587.4 L244.0 584.9 L247.0 586.0 L250.0 584.4 L253.0 584.6 L256.0 588.5 L259.0 584.8 L262.0 581.3 L265.0 584.2 L268.0 586.1 L271.0 587.5 L274.0 586.7 L277.0 587.4 L280.0 586.9 L283.0 581.3 L286.0 584.9 L289.0 585.7 L292.0 585.4 L295.0 584.1 L298.0 584.2 L301.0 584.3 L304.0 586.1 L305.0 581.3 L307.0 586.9 L310.0 583.9 L313.0 585.5 L316.0 586.6 L319.0 591.1 L322.0 590.5 L325.0 591.1 L328.0 591.0 L331.0 591.1 L333.5 591.0 L333.5 593.5 L331.0 593.6 L328.0 593.5 L325.0 593.5 L322.0 593.9 L319.0 593.8 L316.0 597.2 L313.0 598.8 L310.0 600.7 L307.0 597.0 L305.0 602.4 L304.0 598.4 L301.0 600.4 L298.0 600.1 L295.0 601.0 L292.0 600.1 L289.0 599.5 L286.0 599.9 L283.0 602.4 L280.0 597.7 L277.0 597.0 L274.0 598.5 L271.0 596.4 L268.0 599.1 L265.0 600.0 L262.0 602.4 L259.0 599.9 L256.0 595.3 L253.0 599.9 L250.0 599.8 L247.0 598.4 L244.0 599.3 L241.0 597.3 L240.0 602.4 L238.0 600.4 L235.0 596.8 L232.0 599.9 L229.0 598.7 L226.0 596.5 L223.0 600.5 L220.0 600.8 L218.0 602.4 L217.0 596.9 L214.0 597.6 L211.0 600.1 L208.0 597.1 L205.0 601.1 L202.0 598.7 L199.0 597.1 L196.0 600.3 L193.0 598.3 L192.0 602.4 L190.0 598.7 L187.0 598.4 L184.0 598.9 L181.0 600.5 L178.0 599.4 L175.0 595.5 L172.0 598.4 L170.0 602.4 L169.0 600.4 L166.0 599.6 L163.0 600.5 L160.0 596.6 L157.0 596.4 L154.0 595.6 L151.0 597.0 L148.0 599.7 L145.0 598.9 L143.0 602.4 L142.0 598.2 L139.0 595.0 L136.0 596.8 L133.0 599.0 L130.0 600.1 L127.0 595.9 L125.0 602.4 L124.0 598.5 L121.0 600.0 L118.0 599.6 L115.0 597.2 L112.0 594.9 L109.0 595.6 L106.0 596.0 L103.0 593.9 L100.0 594.2 L97.0 595.9 L94.0 593.9 L91.0 593.9 L88.0 595.7 L85.0 596.1 L82.0 594.4 L79.0 595.3 L76.0 594.8 L73.0 593.9 L70.0 595.3 L67.0 593.8Z"/><path d="M67.0 666.8 L68.0 666.5 L69.0 665.9 L70.0 665.2 L71.0 665.6 L72.0 666.1 L73.0 666.5 L74.0 666.5 L75.0 666.5 L76.0 666.5 L77.0 666.5 L78.0 666.5 L79.0 666.5 L80.0 666.5 L81.0 666.5 L82.0 666.5 L83.0 666.5 L84.0 666.5 L85.0 666.5 L86.0 666.5 L87.0 666.5 L88.0 666.5 L89.0 666.5 L90.0 665.6 L91.0 664.8 L92.0 663.9 L93.0 663.0 L94.0 663.9 L95.0 664.8 L96.0 665.6 L97.0 666.5 L98.0 666.5 L99.0 666.5 L100.0 666.5 L101.0 666.5 L102.0 666.5 L103.0 666.5 L104.0 666.5 L105.0 666.5 L106.0 666.5 L107.0 666.5 L108.0 666.5 L109.0 666.5 L110.0 666.5 L111.0 666.5 L112.0 666.5 L113.0 666.5 L114.0 666.5 L115.0 665.9 L116.0 665.2 L117.0 664.6 L118.0 664.0 L119.0 664.6 L120.0 665.2 L121.0 665.9 L122.0 666.5 L123.0 666.5 L124.0 666.5 L125.0 666.5 L126.0 666.5 L127.0 666.5 L128.0 666.5 L129.0 666.5 L130.0 666.5 L131.0 666.5 L132.0 666.5 L133.0 666.5 L134.0 666.5 L135.0 666.5 L136.0 666.5 L137.0 666.5 L138.0 666.5 L139.0 666.5 L140.0 666.5 L141.0 666.5 L142.0 666.5 L143.0 666.5 L144.0 666.5 L145.0 666.5 L146.0 666.5 L147.0 666.5 L148.0 666.5 L149.0 666.5 L150.0 666.5 L151.0 666.5 L152.0 666.5 L153.0 666.5 L154.0 666.5 L155.0 666.5 L156.0 666.5 L157.0 666.5 L158.0 666.5 L159.0 666.5 L160.0 666.5 L161.0 666.5 L162.0 666.5 L163.0 665.6 L164.0 664.8 L165.0 663.9 L166.0 663.0 L167.0 663.9 L168.0 664.8 L169.0 665.6 L170.0 666.5 L171.0 666.5 L172.0 666.5 L173.0 666.5 L174.0 666.5 L175.0 666.5 L176.0 666.5 L177.0 666.5 L178.0 666.5 L179.0 666.5 L180.0 666.5 L181.0 666.5 L182.0 666.5 L183.0 666.5 L184.0 666.5 L185.0 666.5 L186.0 666.5 L187.0 666.5 L188.0 665.9 L189.0 665.2 L190.0 664.6 L191.0 664.0 L192.0 664.6 L193.0 665.2 L194.0 665.9 L195.0 666.5 L196.0 666.5 L197.0 666.5 L198.0 666.5 L199.0 666.5 L200.0 666.5 L201.0 666.5 L202.0 666.5 L203.0 666.5 L204.0 666.5 L205.0 666.5 L206.0 666.5 L207.0 666.5 L208.0 666.5 L209.0 666.3 L210.0 665.8 L211.0 665.3 L212.0 664.8 L213.0 665.3 L214.0 665.8 L215.0 666.3 L216.0 666.5 L217.0 666.5 L218.0 666.5 L219.0 666.5 L220.0 666.5 L221.0 666.5 L222.0 666.5 L223.0 666.5 L224.0 666.5 L225.0 666.5 L226.0 666.5 L227.0 666.5 L228.0 666.5 L229.0 666.5 L230.0 666.5 L231.0 666.5 L232.0 666.5 L233.0 666.5 L234.0 666.5 L235.0 666.5 L236.0 665.9 L237.0 665.2 L238.0 664.6 L239.0 664.0 L240.0 664.6 L241.0 665.2 L242.0 665.9 L243.0 666.5 L244.0 666.5 L245.0 666.5 L246.0 666.5 L247.0 666.1 L248.0 665.8 L249.0 665.4 L250.0 665.8 L251.0 666.1 L252.0 666.5 L253.0 666.0 L254.0 665.5 L255.0 665.0 L256.0 665.4 L257.0 665.8 L258.0 666.2 L259.0 666.4 L260.0 665.9 L261.0 664.8 L262.0 663.6 L263.0 662.5 L264.0 662.7 L265.0 663.8 L266.0 664.9 L267.0 666.0 L268.0 666.5 L269.0 666.5 L270.0 666.5 L271.0 666.5 L272.0 666.5 L273.0 666.5 L274.0 666.5 L275.0 666.5 L276.0 666.5 L277.0 666.5 L278.0 666.5 L279.0 666.5 L280.0 666.5 L281.0 666.5 L282.0 666.5 L283.0 666.5 L284.0 666.5 L285.0 666.5 L286.0 666.5 L287.0 666.5 L288.0 666.5 L289.0 666.5 L290.0 666.5 L291.0 666.5 L292.0 666.5 L293.0 666.5 L294.0 666.5 L295.0 666.5 L296.0 666.5 L297.0 666.5 L298.0 666.5 L299.0 666.5 L300.0 666.5 L301.0 666.5 L302.0 666.5 L303.0 666.5 L304.0 666.5 L305.0 666.5 L306.0 666.5 L307.0 666.5 L308.0 666.5 L309.0 666.5 L310.0 666.5 L311.0 666.5 L312.0 666.5 L313.0 666.5 L314.0 666.5 L315.0 666.5 L316.0 666.5 L317.0 666.5 L318.0 666.5 L319.0 666.5 L320.0 666.5 L321.0 666.5 L322.0 666.5 L323.0 666.5 L324.0 666.5 L325.0 666.5 L326.0 666.5 L327.0 666.5 L328.0 666.5 L329.0 666.5 L330.0 666.5 L331.0 666.5 L332.0 666.5 L333.0 666.5 L333.5 666.5 L333.5 669.5 L333.0 669.5 L332.0 669.5 L331.0 669.5 L330.0 669.5 L329.0 669.5 L328.0 669.5 L327.0 669.5 L326.0 669.5 L325.0 669.5 L324.0 669.5 L323.0 669.5 L322.0 669.5 L321.0 669.5 L320.0 669.5 L319.0 669.5 L318.0 669.5 L317.0 669.5 L316.0 669.5 L315.0 669.5 L314.0 669.5 L313.0 669.5 L312.0 669.5 L311.0 669.5 L310.0 669.5 L309.0 669.5 L308.0 669.5 L307.0 669.5 L306.0 669.5 L305.0 669.5 L304.0 669.5 L303.0 669.5 L302.0 669.5 L301.0 669.5 L300.0 669.5 L299.0 669.5 L298.0 669.5 L297.0 669.5 L296.0 669.5 L295.0 669.5 L294.0 669.5 L293.0 669.5 L292.0 669.5 L291.0 669.5 L290.0 669.5 L289.0 669.5 L288.0 669.5 L287.0 669.5 L286.0 669.5 L285.0 669.5 L284.0 669.5 L283.0 669.5 L282.0 669.5 L281.0 669.5 L280.0 669.5 L279.0 669.5 L278.0 669.5 L277.0 669.5 L276.0 669.5 L275.0 669.5 L274.0 669.5 L273.0 669.5 L272.0 669.5 L271.0 669.5 L270.0 669.5 L269.0 669.5 L268.0 669.5 L267.0 670.0 L266.0 671.1 L265.0 672.2 L264.0 673.3 L263.0 673.5 L262.0 672.4 L261.0 671.2 L260.0 670.1 L259.0 669.6 L258.0 669.8 L257.0 670.2 L256.0 670.6 L255.0 671.0 L254.0 670.5 L253.0 670.0 L252.0 669.5 L251.0 669.9 L250.0 670.2 L249.0 670.6 L248.0 670.2 L247.0 669.9 L246.0 669.5 L245.0 669.5 L244.0 669.5 L243.0 669.5 L242.0 670.1 L241.0 670.8 L240.0 671.4 L239.0 672.0 L238.0 671.4 L237.0 670.8 L236.0 670.1 L235.0 669.5 L234.0 669.5 L233.0 669.5 L232.0 669.5 L231.0 669.5 L230.0 669.5 L229.0 669.5 L228.0 669.5 L227.0 669.5 L226.0 669.5 L225.0 669.5 L224.0 669.5 L223.0 669.5 L222.0 669.5 L221.0 669.5 L220.0 669.5 L219.0 669.5 L218.0 669.5 L217.0 669.5 L216.0 669.5 L215.0 669.7 L214.0 670.2 L213.0 670.7 L212.0 671.2 L211.0 670.7 L210.0 670.2 L209.0 669.7 L208.0 669.5 L207.0 669.5 L206.0 669.5 L205.0 669.5 L204.0 669.5 L203.0 669.5 L202.0 669.5 L201.0 669.5 L200.0 669.5 L199.0 669.5 L198.0 669.5 L197.0 669.5 L196.0 669.5 L195.0 669.5 L194.0 670.1 L193.0 670.8 L192.0 671.4 L191.0 672.0 L190.0 671.4 L189.0 670.8 L188.0 670.1 L187.0 669.5 L186.0 669.5 L185.0 669.5 L184.0 669.5 L183.0 669.5 L182.0 669.5 L181.0 669.5 L180.0 669.5 L179.0 669.5 L178.0 669.5 L177.0 669.5 L176.0 669.5 L175.0 669.5 L174.0 669.5 L173.0 669.5 L172.0 669.5 L171.0 669.5 L170.0 669.5 L169.0 670.4 L168.0 671.2 L167.0 672.1 L166.0 673.0 L165.0 672.1 L164.0 671.2 L163.0 670.4 L162.0 669.5 L161.0 669.5 L160.0 669.5 L159.0 669.5 L158.0 669.5 L157.0 669.5 L156.0 669.5 L155.0 669.5 L154.0 669.5 L153.0 669.5 L152.0 669.5 L151.0 669.5 L150.0 669.5 L149.0 669.5 L148.0 669.5 L147.0 669.5 L146.0 669.5 L145.0 669.5 L144.0 669.5 L143.0 669.5 L142.0 669.5 L141.0 669.5 L140.0 669.5 L139.0 669.5 L138.0 669.5 L137.0 669.5 L136.0 669.5 L135.0 669.5 L134.0 669.5 L133.0 669.5 L132.0 669.5 L131.0 669.5 L130.0 669.5 L129.0 669.5 L128.0 669.5 L127.0 669.5 L126.0 669.5 L125.0 669.5 L124.0 669.5 L123.0 669.5 L122.0 669.5 L121.0 670.1 L120.0 670.8 L119.0 671.4 L118.0 672.0 L117.0 671.4 L116.0 670.8 L115.0 670.1 L114.0 669.5 L113.0 669.5 L112.0 669.5 L111.0 669.5 L110.0 669.5 L109.0 669.5 L108.0 669.5 L107.0 669.5 L106.0 669.5 L105.0 669.5 L104.0 669.5 L103.0 669.5 L102.0 669.5 L101.0 669.5 L100.0 669.5 L99.0 669.5 L98.0 669.5 L97.0 669.5 L96.0 670.4 L95.0 671.2 L94.0 672.1 L93.0 673.0 L92.0 672.1 L91.0 671.2 L90.0 670.4 L89.0 669.5 L88.0 669.5 L87.0 669.5 L86.0 669.5 L85.0 669.5 L84.0 669.5 L83.0 669.5 L82.0 669.5 L81.0 669.5 L80.0 669.5 L79.0 669.5 L78.0 669.5 L77.0 669.5 L76.0 669.5 L75.0 669.5 L74.0 669.5 L73.0 669.5 L72.0 669.9 L71.0 670.4 L70.0 670.8 L69.0 670.1 L68.0 669.5 L67.0 669.2Z"/><path d="M67.0 758.9 L68.0 758.5 L69.0 758.0 L70.0 757.3 L71.0 757.5 L72.0 757.8 L73.0 757.4 L74.0 757.0 L75.0 756.3 L76.0 755.9 L77.0 756.0 L78.0 756.7 L79.0 756.9 L80.0 757.3 L81.0 757.9 L82.0 757.9 L83.0 757.9 L84.0 757.7 L85.0 757.8 L86.0 757.9 L87.0 757.7 L88.0 757.7 L89.0 757.7 L90.0 757.8 L91.0 757.4 L92.0 757.6 L93.0 757.7 L94.0 757.8 L95.0 758.3 L96.0 758.2 L97.0 757.8 L98.0 757.9 L99.0 757.8 L100.0 757.8 L101.0 757.2 L102.0 756.7 L103.0 756.0 L104.0 755.9 L105.0 756.1 L106.0 756.9 L107.0 757.1 L108.0 757.5 L109.0 757.5 L110.0 757.3 L111.0 757.4 L112.0 757.4 L113.0 757.6 L114.0 757.8 L115.0 757.0 L116.0 757.1 L117.0 756.2 L118.0 755.9 L119.0 756.2 L120.0 756.6 L121.0 757.2 L122.0 757.8 L123.0 757.5 L124.0 757.4 L125.0 757.0 L126.0 757.4 L127.0 757.6 L128.0 757.5 L129.0 757.3 L130.0 757.5 L131.0 756.8 L132.0 756.4 L133.0 755.7 L134.0 756.0 L135.0 756.5 L136.0 757.1 L137.0 757.6 L138.0 757.4 L139.0 757.6 L140.0 757.3 L141.0 757.4 L142.0 757.6 L143.0 757.6 L144.0 757.7 L145.0 757.3 L146.0 757.3 L147.0 757.2 L148.0 757.5 L149.0 757.5 L150.0 757.1 L151.0 757.3 L152.0 757.4 L153.0 757.6 L154.0 757.7 L155.0 757.7 L156.0 757.9 L157.0 757.7 L158.0 757.2 L159.0 756.7 L160.0 755.9 L161.0 756.1 L162.0 756.5 L163.0 757.0 L164.0 757.4 L165.0 757.6 L166.0 757.4 L167.0 757.1 L168.0 757.1 L169.0 757.2 L170.0 757.1 L171.0 757.6 L172.0 757.5 L173.0 757.5 L174.0 757.3 L175.0 757.2 L176.0 757.3 L177.0 757.6 L178.0 757.3 L179.0 757.6 L180.0 757.4 L181.0 757.7 L182.0 757.8 L183.0 757.6 L184.0 757.8 L185.0 757.3 L186.0 756.8 L187.0 756.5 L188.0 755.6 L189.0 756.0 L190.0 756.7 L191.0 757.0 L192.0 757.5 L193.0 757.7 L194.0 757.6 L195.0 757.5 L196.0 757.6 L197.0 757.9 L198.0 757.9 L199.0 757.7 L200.0 757.2 L201.0 756.7 L202.0 756.5 L203.0 755.9 L204.0 756.3 L205.0 757.0 L206.0 757.5 L207.0 757.7 L208.0 757.7 L209.0 757.4 L210.0 757.2 L211.0 757.5 L212.0 757.6 L213.0 758.0 L214.0 757.8 L215.0 757.5 L216.0 756.8 L217.0 756.3 L218.0 755.9 L219.0 755.8 L220.0 756.3 L221.0 756.9 L222.0 757.3 L223.0 757.5 L224.0 757.6 L225.0 757.1 L226.0 757.2 L227.0 757.3 L228.0 757.7 L229.0 757.3 L230.0 756.8 L231.0 756.2 L232.0 755.8 L233.0 756.0 L234.0 756.6 L235.0 757.3 L236.0 757.8 L237.0 757.7 L238.0 757.6 L239.0 757.4 L240.0 757.7 L241.0 757.8 L242.0 756.9 L243.0 756.6 L244.0 756.2 L245.0 755.8 L246.0 756.5 L247.0 756.9 L248.0 757.7 L249.0 757.6 L250.0 757.8 L251.0 757.4 L252.0 757.7 L253.0 757.6 L254.0 757.5 L255.0 757.7 L256.0 757.6 L257.0 757.6 L258.0 757.6 L259.0 757.5 L260.0 757.6 L261.0 757.5 L262.0 757.0 L263.0 756.5 L264.0 755.7 L265.0 756.0 L266.0 756.9 L267.0 757.2 L268.0 757.8 L269.0 757.7 L270.0 757.7 L271.0 756.9 L272.0 756.6 L273.0 756.0 L274.0 756.2 L275.0 756.3 L276.0 756.9 L277.0 757.5 L278.0 757.7 L279.0 757.5 L280.0 757.6 L281.0 757.4 L282.0 757.2 L283.0 757.2 L284.0 757.2 L285.0 757.2 L286.0 757.7 L287.0 757.3 L288.0 756.8 L289.0 756.5 L290.0 755.6 L291.0 756.2 L292.0 756.9 L293.0 757.4 L294.0 757.7 L295.0 757.8 L296.0 757.4 L297.0 757.3 L298.0 757.8 L299.0 757.8 L300.0 757.6 L301.0 757.1 L302.0 756.5 L303.0 756.1 L304.0 755.7 L305.0 756.2 L306.0 756.8 L307.0 757.3 L308.0 757.9 L309.0 757.5 L310.0 757.4 L311.0 757.1 L312.0 757.4 L313.0 757.8 L314.0 757.4 L315.0 756.9 L316.0 756.5 L317.0 756.1 L318.0 756.0 L319.0 756.1 L320.0 756.9 L321.0 757.5 L322.0 757.7 L323.0 757.6 L324.0 757.5 L325.0 757.1 L326.0 757.5 L327.0 757.9 L328.0 757.3 L329.0 756.9 L330.0 756.1 L331.0 755.8 L332.0 756.3 L333.0 756.9 L333.5 756.9 L333.5 763.7 L333.0 763.8 L332.0 763.9 L331.0 764.5 L330.0 764.2 L329.0 763.5 L328.0 763.1 L327.0 762.6 L326.0 762.7 L325.0 763.1 L324.0 762.9 L323.0 762.7 L322.0 762.7 L321.0 762.8 L320.0 763.6 L319.0 764.1 L318.0 764.5 L317.0 764.2 L316.0 763.8 L315.0 763.2 L314.0 762.7 L313.0 762.5 L312.0 763.1 L311.0 763.3 L310.0 763.0 L309.0 762.9 L308.0 762.7 L307.0 763.3 L306.0 763.4 L305.0 764.2 L304.0 764.7 L303.0 764.3 L302.0 763.6 L301.0 763.2 L300.0 762.5 L299.0 762.9 L298.0 762.7 L297.0 762.9 L296.0 763.0 L295.0 762.6 L294.0 762.5 L293.0 763.2 L292.0 763.8 L291.0 764.4 L290.0 764.8 L289.0 764.1 L288.0 763.5 L287.0 763.3 L286.0 762.6 L285.0 763.1 L284.0 763.1 L283.0 763.0 L282.0 763.0 L281.0 763.2 L280.0 762.8 L279.0 763.1 L278.0 762.8 L277.0 762.9 L276.0 763.5 L275.0 764.0 L274.0 764.2 L273.0 764.2 L272.0 763.9 L271.0 763.2 L270.0 762.8 L269.0 762.5 L268.0 762.7 L267.0 763.5 L266.0 763.4 L265.0 764.2 L264.0 764.7 L263.0 764.0 L262.0 763.6 L261.0 763.0 L260.0 762.8 L259.0 762.9 L258.0 762.8 L257.0 762.8 L256.0 762.9 L255.0 762.7 L254.0 762.7 L253.0 762.5 L252.0 762.6 L251.0 762.7 L250.0 762.7 L249.0 762.8 L248.0 763.0 L247.0 763.4 L246.0 764.0 L245.0 764.3 L244.0 764.3 L243.0 763.9 L242.0 763.4 L241.0 762.9 L240.0 762.5 L239.0 762.9 L238.0 762.9 L237.0 762.8 L236.0 762.7 L235.0 763.4 L234.0 763.9 L233.0 764.3 L232.0 764.8 L231.0 764.4 L230.0 763.5 L229.0 763.2 L228.0 762.4 L227.0 762.9 L226.0 763.3 L225.0 763.0 L224.0 763.1 L223.0 763.0 L222.0 763.1 L221.0 763.3 L220.0 763.8 L219.0 764.6 L218.0 764.3 L217.0 764.2 L216.0 763.7 L215.0 763.0 L214.0 762.5 L213.0 762.4 L212.0 762.6 L211.0 762.9 L210.0 763.1 L209.0 763.0 L208.0 762.9 L207.0 762.8 L206.0 763.1 L205.0 763.6 L204.0 764.3 L203.0 764.3 L202.0 763.9 L201.0 763.6 L200.0 763.0 L199.0 762.5 L198.0 762.6 L197.0 762.7 L196.0 762.9 L195.0 762.7 L194.0 762.8 L193.0 762.6 L192.0 762.8 L191.0 763.3 L190.0 763.7 L189.0 764.4 L188.0 764.5 L187.0 764.2 L186.0 763.7 L185.0 763.1 L184.0 762.5 L183.0 762.8 L182.0 762.5 L181.0 762.7 L180.0 763.0 L179.0 762.9 L178.0 762.8 L177.0 762.9 L176.0 762.9 L175.0 763.0 L174.0 763.2 L173.0 763.0 L172.0 763.2 L171.0 763.0 L170.0 763.3 L169.0 763.0 L168.0 763.4 L167.0 763.2 L166.0 762.9 L165.0 762.6 L164.0 762.7 L163.0 763.3 L162.0 763.9 L161.0 764.2 L160.0 764.5 L159.0 763.6 L158.0 763.2 L157.0 762.9 L156.0 762.8 L155.0 762.8 L154.0 762.9 L153.0 763.2 L152.0 762.9 L151.0 763.0 L150.0 763.2 L149.0 763.0 L148.0 763.0 L147.0 762.8 L146.0 762.8 L145.0 763.0 L144.0 762.6 L143.0 763.0 L142.0 763.1 L141.0 762.7 L140.0 763.2 L139.0 762.9 L138.0 762.8 L137.0 762.9 L136.0 763.3 L135.0 764.0 L134.0 764.3 L133.0 764.8 L132.0 764.2 L131.0 763.8 L130.0 763.0 L129.0 762.9 L128.0 763.1 L127.0 762.8 L126.0 763.2 L125.0 763.1 L124.0 762.8 L123.0 762.8 L122.0 762.7 L121.0 763.3 L120.0 763.5 L119.0 764.0 L118.0 764.3 L117.0 764.1 L116.0 763.5 L115.0 763.1 L114.0 762.5 L113.0 762.8 L112.0 762.9 L111.0 763.2 L110.0 763.3 L109.0 762.9 L108.0 762.6 L107.0 763.5 L106.0 763.8 L105.0 764.2 L104.0 764.5 L103.0 764.3 L102.0 763.7 L101.0 763.3 L100.0 762.4 L99.0 762.4 L98.0 762.7 L97.0 762.6 L96.0 762.3 L95.0 762.4 L94.0 762.7 L93.0 762.8 L92.0 762.8 L91.0 762.7 L90.0 762.6 L89.0 762.9 L88.0 762.8 L87.0 762.8 L86.0 762.5 L85.0 762.5 L84.0 762.4 L83.0 762.8 L82.0 762.6 L81.0 762.6 L80.0 762.9 L79.0 763.3 L78.0 763.8 L77.0 764.4 L76.0 764.4 L75.0 764.1 L74.0 763.3 L73.0 762.9 L72.0 762.5 L71.0 762.9 L70.0 763.1 L69.0 762.5 L68.0 762.1 L67.0 761.5Z"/><path d="M67.0 823.5 L70.0 822.5 L73.0 822.0 L76.0 821.1 L79.0 821.1 L82.0 821.6 L85.0 822.4 L88.0 821.4 L91.0 820.7 L94.0 821.0 L97.0 820.8 L100.0 821.1 L101.3 816.5 L103.0 820.5 L106.0 820.6 L109.0 821.4 L112.0 821.3 L115.0 821.8 L118.0 822.2 L121.0 822.2 L124.0 820.6 L127.0 820.3 L128.9 816.5 L130.0 822.2 L133.0 820.4 L136.0 821.3 L139.0 822.1 L142.0 820.5 L145.0 821.0 L148.0 821.7 L151.0 821.6 L153.7 816.5 L154.0 821.3 L157.0 821.1 L160.0 822.0 L163.0 821.0 L166.0 820.9 L169.0 821.2 L172.0 822.1 L175.0 823.1 L178.0 821.7 L181.0 820.8 L184.0 822.2 L187.0 822.3 L189.5 816.5 L190.0 822.5 L193.0 820.8 L196.0 821.4 L199.0 821.6 L202.0 821.6 L205.0 822.5 L208.0 821.9 L211.0 822.6 L214.0 821.1 L217.0 821.8 L220.0 821.1 L222.6 816.5 L223.0 822.8 L226.0 822.0 L229.0 822.2 L232.0 822.1 L235.0 822.4 L238.0 822.1 L241.0 822.2 L244.0 821.9 L247.0 821.4 L248.8 816.5 L250.0 822.1 L253.0 822.1 L256.0 821.9 L259.0 821.9 L262.0 820.9 L265.0 822.3 L268.0 822.6 L271.0 822.5 L274.0 821.5 L277.0 821.3 L280.0 821.2 L281.8 816.5 L283.0 821.8 L286.0 822.4 L289.0 821.9 L292.0 821.0 L295.0 821.4 L298.0 821.6 L301.0 820.3 L304.0 821.2 L307.0 820.5 L309.4 816.5 L310.0 820.2 L313.0 820.2 L316.0 819.8 L319.0 820.1 L322.0 820.7 L325.0 821.2 L328.0 819.2 L331.0 819.5 L333.5 820.1 L333.5 829.9 L331.0 829.8 L328.0 830.7 L325.0 828.4 L322.0 830.0 L319.0 830.3 L316.0 830.2 L313.0 829.9 L310.0 830.0 L309.4 832.8 L307.0 829.5 L304.0 828.3 L301.0 829.7 L298.0 828.0 L295.0 829.2 L292.0 829.0 L289.0 827.9 L286.0 827.8 L283.0 828.1 L281.8 832.8 L280.0 828.6 L277.0 828.7 L274.0 828.7 L271.0 827.1 L268.0 827.5 L265.0 827.9 L262.0 828.4 L259.0 828.2 L256.0 827.9 L253.0 827.8 L250.0 827.8 L248.8 832.8 L247.0 828.7 L244.0 827.8 L241.0 827.6 L238.0 827.3 L235.0 827.7 L232.0 828.0 L229.0 827.9 L226.0 828.0 L223.0 827.8 L222.6 832.8 L220.0 828.2 L217.0 828.3 L214.0 828.4 L211.0 827.8 L208.0 827.4 L205.0 827.4 L202.0 828.0 L199.0 828.2 L196.0 828.6 L193.0 829.1 L190.0 828.2 L189.5 832.8 L187.0 828.0 L184.0 827.7 L181.0 828.9 L178.0 828.0 L175.0 827.3 L172.0 828.1 L169.0 828.8 L166.0 829.1 L163.0 829.4 L160.0 827.8 L157.0 829.2 L154.0 828.7 L153.7 832.8 L151.0 828.1 L148.0 828.3 L145.0 829.1 L142.0 829.2 L139.0 828.1 L136.0 828.5 L133.0 829.1 L130.0 828.0 L128.9 832.8 L127.0 829.0 L124.0 829.3 L121.0 827.8 L118.0 827.6 L115.0 828.0 L112.0 828.4 L109.0 829.0 L106.0 829.4 L103.0 829.2 L101.3 832.8 L100.0 829.4 L97.0 828.8 L94.0 829.4 L91.0 828.8 L88.0 828.4 L85.0 827.7 L82.0 828.5 L79.0 829.4 L76.0 829.4 L73.0 827.7 L70.0 827.8 L67.0 826.5Z"/><path d="M67.0 915.7 L70.0 914.7 L73.0 914.4 L76.0 913.6 L77.8 909.7 L79.0 913.5 L82.0 914.3 L85.0 914.1 L86.0 909.7 L88.0 913.7 L91.0 913.0 L93.6 909.7 L94.0 913.6 L97.0 913.2 L100.0 914.1 L101.9 909.7 L103.0 913.3 L106.0 913.1 L109.0 913.6 L109.5 909.7 L112.0 913.4 L115.0 914.4 L118.0 913.5 L118.4 909.7 L121.0 913.5 L124.0 914.4 L126.0 909.7 L127.0 913.9 L130.0 913.8 L133.0 914.4 L133.6 909.7 L136.0 913.7 L139.0 914.4 L142.0 913.9 L144.0 909.7 L145.0 913.4 L148.0 913.3 L151.0 914.2 L152.2 909.7 L154.0 914.2 L157.0 913.9 L160.0 913.8 L161.1 909.7 L163.0 913.2 L166.0 913.6 L168.7 909.7 L169.0 913.9 L172.0 914.1 L175.0 913.5 L176.3 909.7 L178.0 914.1 L181.0 913.4 L184.0 913.5 L185.3 909.7 L187.0 913.7 L190.0 914.3 L193.0 913.1 L193.5 909.7 L196.0 913.7 L199.0 913.2 L202.0 913.6 L205.0 913.2 L208.0 913.7 L209.6 909.7 L211.0 913.0 L214.0 913.6 L217.0 913.5 L218.0 909.7 L220.0 914.1 L223.0 913.5 L224.8 909.7 L226.0 913.7 L229.0 914.0 L232.0 913.4 L233.0 909.7 L235.0 913.6 L238.0 914.0 L241.0 913.9 L241.3 909.7 L244.0 914.3 L247.0 913.8 L250.0 913.3 L250.3 909.7 L253.0 913.3 L256.0 914.0 L259.0 914.2 L260.0 909.7 L262.0 913.1 L265.0 914.2 L268.0 915.3 L271.0 914.9 L274.0 915.0 L277.0 911.2 L280.0 911.1 L283.0 910.4 L285.4 908.7 L286.0 910.4 L289.0 911.0 L292.0 910.5 L295.0 912.1 L298.0 911.5 L301.0 910.4 L302.0 908.7 L304.0 911.5 L307.0 910.0 L310.0 911.6 L310.2 908.7 L313.0 910.8 L316.0 911.5 L319.0 910.3 L321.3 908.7 L322.0 910.4 L325.0 910.3 L328.0 910.4 L329.5 908.7 L331.0 911.5 L333.5 913.9 L333.5 920.2 L331.0 923.0 L329.5 925.0 L328.0 924.0 L325.0 924.1 L322.0 923.7 L321.3 925.0 L319.0 924.3 L316.0 922.9 L313.0 923.5 L310.2 925.0 L310.0 922.8 L307.0 924.1 L304.0 922.9 L302.0 925.0 L301.0 924.2 L298.0 922.7 L295.0 922.1 L292.0 924.0 L289.0 923.8 L286.0 924.0 L285.4 925.0 L283.0 924.1 L280.0 923.8 L277.0 923.3 L274.0 919.5 L271.0 919.9 L268.0 919.3 L265.0 919.8 L262.0 920.9 L260.0 924.1 L259.0 919.9 L256.0 920.2 L253.0 921.4 L250.3 924.1 L250.0 921.1 L247.0 920.6 L244.0 920.2 L241.3 924.1 L241.0 920.6 L238.0 920.3 L235.0 920.9 L233.0 924.1 L232.0 921.1 L229.0 920.3 L226.0 921.0 L224.8 924.1 L223.0 920.8 L220.0 920.7 L218.0 924.1 L217.0 920.9 L214.0 921.2 L211.0 921.5 L209.6 924.1 L208.0 920.3 L205.0 921.2 L202.0 921.0 L199.0 920.9 L196.0 920.9 L193.5 924.1 L193.0 921.0 L190.0 920.3 L187.0 920.6 L185.3 924.1 L184.0 921.0 L181.0 920.8 L178.0 920.6 L176.3 924.1 L175.0 920.9 L172.0 919.9 L169.0 920.6 L168.7 924.1 L166.0 920.2 L163.0 920.7 L161.1 924.1 L160.0 920.7 L157.0 920.5 L154.0 920.3 L152.2 924.1 L151.0 920.0 L148.0 921.4 L145.0 920.8 L144.0 924.1 L142.0 920.3 L139.0 920.0 L136.0 920.6 L133.6 924.1 L133.0 920.4 L130.0 920.8 L127.0 920.2 L126.0 924.1 L124.0 920.2 L121.0 921.0 L118.4 924.1 L118.0 920.5 L115.0 920.0 L112.0 921.3 L109.5 924.1 L109.0 920.9 L106.0 921.3 L103.0 921.3 L101.9 924.1 L100.0 920.2 L97.0 920.9 L94.0 921.3 L93.6 924.1 L91.0 921.1 L88.0 921.1 L86.0 924.1 L85.0 920.5 L82.0 920.2 L79.0 920.8 L77.8 924.1 L76.0 921.0 L73.0 920.0 L70.0 920.1 L67.0 918.7Z"/><path d="M67.0 981.1 L68.0 981.1 L69.0 980.9 L70.0 980.5 L71.0 980.6 L72.0 980.8 L73.0 980.8 L74.0 980.4 L75.0 980.7 L76.0 979.1 L77.0 977.3 L78.0 976.4 L79.0 974.3 L80.0 973.1 L81.0 973.1 L82.0 976.2 L83.0 978.9 L84.0 976.7 L85.0 974.7 L86.0 975.1 L87.0 976.6 L88.0 978.7 L89.0 979.0 L90.0 979.2 L91.0 979.7 L92.0 979.7 L93.0 979.9 L94.0 979.3 L95.0 979.6 L96.0 979.1 L97.0 978.9 L98.0 978.0 L99.0 977.4 L100.0 977.2 L101.0 975.5 L102.0 974.5 L103.0 972.3 L104.0 971.5 L105.0 973.7 L106.0 973.4 L107.0 974.5 L108.0 976.3 L109.0 977.5 L110.0 976.9 L111.0 975.7 L112.0 973.6 L113.0 972.9 L114.0 971.4 L115.0 971.8 L116.0 972.1 L117.0 974.0 L118.0 975.0 L119.0 976.3 L120.0 976.3 L121.0 976.2 L122.0 976.7 L123.0 976.8 L124.0 976.2 L125.0 976.7 L126.0 976.4 L127.0 975.7 L128.0 973.7 L129.0 973.1 L130.0 975.4 L131.0 976.3 L132.0 977.6 L133.0 978.5 L134.0 978.5 L135.0 978.3 L136.0 978.3 L137.0 978.1 L138.0 978.3 L139.0 978.5 L140.0 978.3 L141.0 978.3 L142.0 978.0 L143.0 977.9 L144.0 977.9 L145.0 977.9 L146.0 978.2 L147.0 978.2 L148.0 978.1 L149.0 977.7 L150.0 978.0 L151.0 978.4 L152.0 978.0 L153.0 978.2 L154.0 978.4 L155.0 978.4 L156.0 978.3 L157.0 978.8 L158.0 978.5 L159.0 978.8 L160.0 978.3 L161.0 976.3 L162.0 974.1 L163.0 972.3 L164.0 973.6 L165.0 974.3 L166.0 975.9 L167.0 975.1 L168.0 975.7 L169.0 975.1 L170.0 975.5 L171.0 977.2 L172.0 977.9 L173.0 976.1 L174.0 974.5 L175.0 973.0 L176.0 972.0 L177.0 971.1 L178.0 972.5 L179.0 973.7 L180.0 975.1 L181.0 976.5 L182.0 976.6 L183.0 976.0 L184.0 975.8 L185.0 974.9 L186.0 975.9 L187.0 977.4 L188.0 976.8 L189.0 975.3 L190.0 972.9 L191.0 975.6 L192.0 977.3 L193.0 979.3 L194.0 980.0 L195.0 980.2 L196.0 980.4 L197.0 980.2 L198.0 979.8 L199.0 979.3 L200.0 977.9 L201.0 977.2 L202.0 975.8 L203.0 974.3 L204.0 973.6 L205.0 972.7 L206.0 972.3 L207.0 972.0 L208.0 973.7 L209.0 976.4 L210.0 977.9 L211.0 976.9 L212.0 976.9 L213.0 976.0 L214.0 975.5 L215.0 976.4 L216.0 977.5 L217.0 977.6 L218.0 978.4 L219.0 978.2 L220.0 978.8 L221.0 978.7 L222.0 978.4 L223.0 978.5 L224.0 977.9 L225.0 977.5 L226.0 977.2 L227.0 976.9 L228.0 976.6 L229.0 975.5 L230.0 976.3 L231.0 977.6 L232.0 978.4 L233.0 977.5 L234.0 975.9 L235.0 974.4 L236.0 974.0 L237.0 976.5 L238.0 977.8 L239.0 979.3 L240.0 980.1 L241.0 980.7 L242.0 980.8 L243.0 980.9 L244.0 980.8 L245.0 980.8 L246.0 981.0 L247.0 980.9 L248.0 980.7 L249.0 980.9 L250.0 981.0 L251.0 980.9 L252.0 980.7 L253.0 980.7 L254.0 981.1 L255.0 980.9 L256.0 981.0 L257.0 980.8 L258.0 981.0 L259.0 979.0 L260.0 977.5 L261.0 974.8 L262.0 973.8 L263.0 972.2 L264.0 975.5 L265.0 977.5 L266.0 977.3 L267.0 976.3 L268.0 976.3 L269.0 976.8 L270.0 977.5 L271.0 976.2 L272.0 975.8 L273.0 974.3 L274.0 973.3 L275.0 973.4 L276.0 974.5 L277.0 975.5 L278.0 976.3 L279.0 977.1 L280.0 976.6 L281.0 976.6 L282.0 976.8 L283.0 976.2 L284.0 976.3 L285.0 976.0 L286.0 976.4 L287.0 975.9 L288.0 976.1 L289.0 976.8 L290.0 977.4 L291.0 978.6 L292.0 976.2 L293.0 974.1 L294.0 973.4 L295.0 976.3 L296.0 977.1 L297.0 979.7 L298.0 979.8 L299.0 980.7 L300.0 980.6 L301.0 980.2 L302.0 980.4 L303.0 980.5 L304.0 980.4 L305.0 980.5 L306.0 980.3 L307.0 980.3 L308.0 978.9 L309.0 975.9 L310.0 972.2 L311.0 974.1 L312.0 976.4 L313.0 975.3 L314.0 972.9 L315.0 974.0 L316.0 975.7 L317.0 977.2 L318.0 978.2 L319.0 979.1 L320.0 979.3 L321.0 978.0 L322.0 976.3 L323.0 975.5 L324.0 974.2 L325.0 973.0 L326.0 972.8 L327.0 976.3 L328.0 977.7 L329.0 976.1 L330.0 974.5 L331.0 972.7 L332.0 971.4 L333.0 970.2 L333.5 970.6 L333.5 994.3 L333.0 994.3 L332.0 993.1 L331.0 991.9 L330.0 989.8 L329.0 988.2 L328.0 987.2 L327.0 988.4 L326.0 992.0 L325.0 991.4 L324.0 990.2 L323.0 989.2 L322.0 988.1 L321.0 986.6 L320.0 985.0 L319.0 985.3 L318.0 986.2 L317.0 987.4 L316.0 988.8 L315.0 990.3 L314.0 991.8 L313.0 989.3 L312.0 988.3 L311.0 990.4 L310.0 992.5 L309.0 988.7 L308.0 985.8 L307.0 984.2 L306.0 984.0 L305.0 983.8 L304.0 984.0 L303.0 984.2 L302.0 984.2 L301.0 984.3 L300.0 984.1 L299.0 983.9 L298.0 984.8 L297.0 985.0 L296.0 987.3 L295.0 988.4 L294.0 991.2 L293.0 990.6 L292.0 988.5 L291.0 986.1 L290.0 987.3 L289.0 988.2 L288.0 988.2 L287.0 988.6 L286.0 988.3 L285.0 988.7 L284.0 988.3 L283.0 988.4 L282.0 987.8 L281.0 988.3 L280.0 988.2 L279.0 987.4 L278.0 988.1 L277.0 989.1 L276.0 990.0 L275.0 990.9 L274.0 991.2 L273.0 990.4 L272.0 988.7 L271.0 988.4 L270.0 987.0 L269.0 987.8 L268.0 988.3 L267.0 988.4 L266.0 987.2 L265.0 987.2 L264.0 989.2 L263.0 992.4 L262.0 990.8 L261.0 989.7 L260.0 987.3 L259.0 985.8 L258.0 983.8 L257.0 983.7 L256.0 983.6 L255.0 983.8 L254.0 983.6 L253.0 983.7 L252.0 983.7 L251.0 983.7 L250.0 983.8 L249.0 983.6 L248.0 983.8 L247.0 983.8 L246.0 983.6 L245.0 983.7 L244.0 983.8 L243.0 983.7 L242.0 983.5 L241.0 983.7 L240.0 984.3 L239.0 985.2 L238.0 986.8 L237.0 988.0 L236.0 990.8 L235.0 990.3 L234.0 988.6 L233.0 986.9 L232.0 986.3 L231.0 987.2 L230.0 988.4 L229.0 988.8 L228.0 987.9 L227.0 987.8 L226.0 987.3 L225.0 987.2 L224.0 986.7 L223.0 986.3 L222.0 986.0 L221.0 986.1 L220.0 985.8 L219.0 986.4 L218.0 986.4 L217.0 987.0 L216.0 986.8 L215.0 988.2 L214.0 988.8 L213.0 988.6 L212.0 987.8 L211.0 987.7 L210.0 986.7 L209.0 988.2 L208.0 990.8 L207.0 992.6 L206.0 992.2 L205.0 991.9 L204.0 991.0 L203.0 990.4 L202.0 989.2 L201.0 987.6 L200.0 986.6 L199.0 985.2 L198.0 984.7 L197.0 984.3 L196.0 984.4 L195.0 984.3 L194.0 984.8 L193.0 985.0 L192.0 987.1 L191.0 988.9 L190.0 992.0 L189.0 989.1 L188.0 987.6 L187.0 987.3 L186.0 989.0 L185.0 989.8 L184.0 989.1 L183.0 988.7 L182.0 988.2 L181.0 988.1 L180.0 989.8 L179.0 990.9 L178.0 992.2 L177.0 993.5 L176.0 992.7 L175.0 991.4 L174.0 990.2 L173.0 988.4 L172.0 986.7 L171.0 987.6 L170.0 989.0 L169.0 989.8 L168.0 988.7 L167.0 989.4 L166.0 988.8 L165.0 990.2 L164.0 990.8 L163.0 992.1 L162.0 990.7 L161.0 988.3 L160.0 986.4 L159.0 985.7 L158.0 985.8 L157.0 985.9 L156.0 986.4 L155.0 986.1 L154.0 986.2 L153.0 986.1 L152.0 986.4 L151.0 986.3 L150.0 986.7 L149.0 986.8 L148.0 986.5 L147.0 986.3 L146.0 986.8 L145.0 986.7 L144.0 986.5 L143.0 986.6 L142.0 986.6 L141.0 986.4 L140.0 986.7 L139.0 986.1 L138.0 986.2 L137.0 986.5 L136.0 986.3 L135.0 986.3 L134.0 986.2 L133.0 986.1 L132.0 987.3 L131.0 988.3 L130.0 989.3 L129.0 991.7 L128.0 990.9 L127.0 989.0 L126.0 988.4 L125.0 987.9 L124.0 988.2 L123.0 987.9 L122.0 988.0 L121.0 988.4 L120.0 988.4 L119.0 988.2 L118.0 989.4 L117.0 990.5 L116.0 992.2 L115.0 993.0 L114.0 993.3 L113.0 992.0 L112.0 990.9 L111.0 988.8 L110.0 987.9 L109.0 987.1 L108.0 988.4 L107.0 990.2 L106.0 991.1 L105.0 990.9 L104.0 993.1 L103.0 992.0 L102.0 990.0 L101.0 989.0 L100.0 987.6 L99.0 987.2 L98.0 986.5 L97.0 985.6 L96.0 985.6 L95.0 985.2 L94.0 985.4 L93.0 984.9 L92.0 985.0 L91.0 984.8 L90.0 985.4 L89.0 985.9 L88.0 985.7 L87.0 988.0 L86.0 989.9 L85.0 990.0 L84.0 988.0 L83.0 985.7 L82.0 988.5 L81.0 991.3 L80.0 991.7 L79.0 990.3 L78.0 988.1 L77.0 987.0 L76.0 985.5 L75.0 984.0 L74.0 984.1 L73.0 983.7 L72.0 983.6 L71.0 983.9 L70.0 983.8 L69.0 983.9 L68.0 983.5 L67.0 983.5Z"/></g></svg>
</div>
</div>
<svg style="position:absolute;left:0;top:78px" width="340" height="38" viewBox="0 78 340 38"><defs><linearGradient id="mg" x1="0" x2="340" y1="0" y2="0" gradientUnits="userSpaceOnUse"><stop offset="0" stop-color="#0c0d0a"/><stop offset="0.11" stop-color="#15170f"/><stop offset="0.2" stop-color="#22261c"/><stop offset="0.28" stop-color="#33362c"/><stop offset="0.33" stop-color="#6a6a62"/><stop offset="0.45" stop-color="#6e605c"/><stop offset="0.6" stop-color="#8e7874"/><stop offset="1" stop-color="#b48c88"/></linearGradient><filter id="mb"><feGaussianBlur stdDeviation="0.45"/></filter><filter id="mb2"><feGaussianBlur stdDeviation="1.2"/></filter></defs><rect x="0" y="78" width="340" height="38" fill="url(#mg)"/><g filter="url(#mb)"><rect x="217.6" y="90.2" width="5.2" height="9.1" fill="#8a8078"/><rect x="189.1" y="93.6" width="9.4" height="5.3" fill="#8a8078"/><rect x="278.0" y="82.4" width="12.5" height="9.7" fill="#d88a80"/><rect x="147.8" y="85.0" width="5.0" height="6.5" fill="#6a625c"/><rect x="288.5" y="90.6" width="10.7" height="3.7" fill="#d0a890"/><rect x="158.7" y="84.5" width="11.1" height="9.2" fill="#a09890"/><rect x="319.8" y="91.1" width="7.1" height="3.3" fill="#d08a80"/><rect x="312.5" y="78.1" width="7.4" height="6.4" fill="#d08a80"/><rect x="166.0" y="104.0" width="11.7" height="9.7" fill="#8a8078"/><rect x="139.6" y="98.0" width="12.1" height="4.4" fill="#8a8078"/><rect x="315.5" y="81.1" width="12.3" height="6.5" fill="#c87070"/><rect x="225.3" y="111.0" width="7.8" height="5.8" fill="#6a625c"/><rect x="271.8" y="81.5" width="12.5" height="8.0" fill="#d08a80"/><rect x="124.4" y="97.1" width="9.5" height="4.0" fill="#a09890"/><rect x="280.0" y="97.9" width="4.3" height="9.1" fill="#d88a80"/><rect x="328.8" y="85.0" width="9.5" height="3.3" fill="#a05a5a"/><rect x="304.8" y="95.8" width="9.1" height="7.8" fill="#a05a5a"/><rect x="137.1" y="109.5" width="7.3" height="4.5" fill="#5a524e"/><rect x="336.8" y="97.8" width="4.2" height="8.6" fill="#a05a5a"/><rect x="112.1" y="80.2" width="6.0" height="4.9" fill="#6a625c"/><rect x="182.0" y="86.8" width="8.7" height="3.4" fill="#b0a098"/><rect x="290.0" y="106.7" width="8.5" height="8.0" fill="#e0a898"/><rect x="241.1" y="78.5" width="9.8" height="3.7" fill="#b06a66"/><rect x="228.3" y="112.3" width="9.0" height="4.0" fill="#d08a80"/><rect x="151.0" y="108.0" width="6.3" height="3.4" fill="#9a9088"/><rect x="172.0" y="82.2" width="5.1" height="4.0" fill="#8a8078"/><rect x="125.9" y="83.9" width="7.5" height="7.3" fill="#786e68"/><rect x="177.0" y="94.3" width="6.5" height="9.7" fill="#a09890"/><rect x="270.7" y="78.5" width="8.1" height="7.9" fill="#d88a80"/><rect x="246.1" y="106.5" width="10.0" height="4.9" fill="#c87070"/><rect x="312.7" y="94.8" width="4.9" height="3.3" fill="#8a5050"/><rect x="141.3" y="106.3" width="11.4" height="4.1" fill="#5a524e"/><rect x="307.9" y="83.7" width="8.3" height="7.1" fill="#8a5050"/><rect x="200.5" y="82.6" width="8.3" height="9.6" fill="#d0a890"/><rect x="127.2" y="100.7" width="9.2" height="7.1" fill="#b0a098"/><rect x="236.1" y="95.9" width="8.8" height="9.4" fill="#6a625c"/><rect x="312.1" y="97.8" width="12.6" height="3.5" fill="#e0a898"/><rect x="276.3" y="79.9" width="10.3" height="6.2" fill="#c89080"/><rect x="314.7" y="103.6" width="10.1" height="3.2" fill="#e0a898"/><rect x="312.4" y="84.8" width="11.4" height="8.1" fill="#c87070"/><rect x="225.1" y="85.2" width="9.6" height="3.6" fill="#8a8078"/><rect x="266.6" y="91.5" width="4.6" height="4.3" fill="#c87070"/><rect x="283.6" y="79.2" width="4.3" height="7.4" fill="#8a5050"/><rect x="234.1" y="77.0" width="11.0" height="5.3" fill="#c87a74"/><rect x="114.0" y="112.3" width="9.3" height="9.8" fill="#a07070"/><rect x="301.9" y="80.0" width="7.1" height="4.6" fill="#b06a66"/><rect x="155.8" y="84.4" width="5.0" height="3.8" fill="#6a625c"/><rect x="196.9" y="104.2" width="8.2" height="6.7" fill="#786e68"/><rect x="311.3" y="79.1" width="4.0" height="8.3" fill="#e0a898"/><rect x="115.5" y="85.6" width="9.5" height="9.7" fill="#b0a098"/><rect x="125.2" y="85.5" width="11.7" height="7.2" fill="#5a524e"/><rect x="257.7" y="101.9" width="5.2" height="3.3" fill="#b06a66"/><rect x="334.4" y="105.9" width="12.1" height="9.5" fill="#d0a890"/><rect x="332.6" y="79.6" width="6.9" height="4.7" fill="#c87070"/><rect x="185.4" y="97.4" width="11.9" height="9.2" fill="#b0a098"/><rect x="159.6" y="86.5" width="8.2" height="7.3" fill="#a07070"/><rect x="212.3" y="83.1" width="7.6" height="5.3" fill="#9a9088"/><rect x="184.4" y="77.0" width="5.9" height="5.6" fill="#9a9088"/><rect x="327.2" y="79.3" width="12.8" height="9.7" fill="#c87070"/><rect x="285.6" y="109.6" width="10.6" height="4.5" fill="#8a5050"/><rect x="287.9" y="78.9" width="10.0" height="6.0" fill="#e0a898"/><rect x="309.7" y="88.3" width="11.5" height="6.6" fill="#c87a74"/><rect x="217.6" y="76.1" width="12.3" height="4.4" fill="#5a524e"/><rect x="114.5" y="111.0" width="4.4" height="4.0" fill="#9a9088"/><rect x="270.1" y="95.4" width="11.1" height="5.8" fill="#d88a80"/><rect x="200.8" y="98.3" width="11.8" height="6.6" fill="#c87a74"/><rect x="193.9" y="86.3" width="6.9" height="5.7" fill="#9a9088"/><rect x="294.3" y="105.5" width="5.6" height="4.2" fill="#d0a890"/><rect x="268.0" y="76.8" width="8.3" height="9.1" fill="#d88a80"/><rect x="319.1" y="104.7" width="6.5" height="4.0" fill="#c89080"/><rect x="221.2" y="113.8" width="5.6" height="4.0" fill="#c87a74"/><rect x="281.5" y="77.9" width="6.5" height="5.4" fill="#c87070"/><rect x="154.5" y="105.6" width="10.0" height="3.7" fill="#9a9088"/><rect x="189.7" y="104.4" width="5.2" height="6.0" fill="#5a524e"/><rect x="303.3" y="97.6" width="4.1" height="6.9" fill="#d08a80"/><rect x="325.4" y="103.2" width="8.5" height="3.4" fill="#d88a80"/><rect x="314.2" y="92.6" width="10.5" height="4.3" fill="#c87a74"/><rect x="321.3" y="112.6" width="4.8" height="5.5" fill="#e0a898"/><rect x="287.0" y="112.8" width="5.7" height="6.7" fill="#8a5050"/><rect x="188.5" y="84.5" width="13.0" height="3.2" fill="#5a524e"/><rect x="261.8" y="88.9" width="10.4" height="5.3" fill="#d88a80"/><rect x="120.2" y="91.4" width="11.0" height="6.2" fill="#8a8078"/><rect x="183.7" y="107.9" width="11.9" height="8.0" fill="#b0a098"/><rect x="304.7" y="106.0" width="12.3" height="4.1" fill="#d88a80"/><rect x="119.5" y="114.0" width="5.3" height="5.9" fill="#9a9088"/><rect x="302.6" y="101.3" width="9.6" height="6.6" fill="#c89080"/><rect x="230.7" y="85.6" width="9.5" height="9.6" fill="#c87a74"/><rect x="234.4" y="113.9" width="10.6" height="7.5" fill="#e0a898"/><rect x="183.0" y="108.4" width="5.9" height="3.1" fill="#a07070"/><rect x="276.3" y="85.7" width="6.7" height="3.1" fill="#d88a80"/><rect x="325.5" y="90.1" width="9.7" height="5.3" fill="#b06a66"/><rect x="238.1" y="77.1" width="10.7" height="4.5" fill="#8a8078"/><rect x="160.0" y="85.8" width="11.9" height="6.1" fill="#786e68"/><rect x="239.1" y="102.8" width="4.7" height="7.9" fill="#b06a66"/><rect x="326.9" y="78.2" width="9.2" height="6.6" fill="#d88a80"/><rect x="195.0" y="101.2" width="12.1" height="5.4" fill="#b0a098"/><rect x="119.8" y="113.0" width="6.8" height="6.2" fill="#a09890"/><rect x="211.4" y="113.2" width="7.8" height="8.3" fill="#8a8078"/><rect x="312.7" y="107.2" width="10.1" height="4.6" fill="#d0a890"/><rect x="195.2" y="90.2" width="12.9" height="8.6" fill="#9a9088"/><rect x="126.6" y="80.5" width="10.5" height="5.3" fill="#a07070"/><rect x="116.4" y="92.5" width="7.5" height="9.6" fill="#a07070"/><rect x="150.5" y="77.1" width="6.6" height="3.1" fill="#6a625c"/><rect x="247.2" y="76.2" width="8.0" height="3.7" fill="#8a5050"/><rect x="174.5" y="112.8" width="5.7" height="9.2" fill="#a09890"/><rect x="144.8" y="104.3" width="12.0" height="4.4" fill="#a07070"/><rect x="176.8" y="103.7" width="11.3" height="6.5" fill="#786e68"/><rect x="335.3" y="95.2" width="11.7" height="3.4" fill="#8a5050"/><rect x="256.7" y="94.1" width="4.8" height="5.9" fill="#a05a5a"/><rect x="128.9" y="94.2" width="9.3" height="6.7" fill="#9a9088"/><rect x="338.2" y="94.6" width="7.7" height="6.5" fill="#c87a74"/><rect x="243.7" y="76.5" width="6.6" height="7.9" fill="#6a625c"/><rect x="308.1" y="97.7" width="6.4" height="6.9" fill="#d0a890"/><rect x="113.5" y="109.2" width="8.6" height="6.1" fill="#786e68"/><rect x="185.9" y="82.7" width="10.3" height="5.2" fill="#786e68"/><rect x="187.5" y="79.1" width="11.0" height="9.5" fill="#a09890"/><rect x="319.3" y="112.5" width="6.3" height="8.6" fill="#c87070"/><rect x="201.7" y="94.0" width="6.8" height="4.6" fill="#d08a80"/><rect x="297.7" y="93.2" width="4.4" height="4.5" fill="#c87a74"/><rect x="242.8" y="79.0" width="11.0" height="9.1" fill="#d08a80"/><rect x="114.0" y="109.8" width="11.0" height="6.1" fill="#9a9088"/><rect x="148.2" y="79.3" width="12.2" height="3.7" fill="#9a9088"/><rect x="169.2" y="90.1" width="6.0" height="8.0" fill="#5a524e"/><rect x="224.4" y="96.4" width="7.7" height="8.0" fill="#d08a80"/><rect x="218.4" y="91.3" width="4.8" height="4.9" fill="#9a9088"/><rect x="277.8" y="83.0" width="4.2" height="7.2" fill="#b06a66"/><rect x="215.8" y="80.7" width="5.0" height="7.3" fill="#b06a66"/><rect x="236.5" y="107.0" width="5.2" height="5.4" fill="#5a524e"/><rect x="193.6" y="111.4" width="4.8" height="3.6" fill="#786e68"/><rect x="240.6" y="112.0" width="9.8" height="7.7" fill="#d0a890"/><rect x="315.8" y="111.6" width="9.6" height="4.8" fill="#c87070"/><rect x="189.5" y="90.0" width="6.6" height="4.4" fill="#9a9088"/><rect x="204.3" y="108.0" width="4.2" height="7.0" fill="#8a8078"/><rect x="267.4" y="82.9" width="4.6" height="9.3" fill="#b06a66"/><rect x="207.5" y="103.3" width="6.5" height="7.6" fill="#6a625c"/><rect x="206.8" y="86.7" width="9.8" height="4.1" fill="#e0a898"/><rect x="233.0" y="76.3" width="12.4" height="3.7" fill="#d08a80"/><rect x="259.6" y="76.1" width="11.0" height="9.1" fill="#b06a66"/><rect x="231.1" y="108.1" width="12.5" height="4.9" fill="#9a9088"/><rect x="266.2" y="101.3" width="10.7" height="8.9" fill="#e0a898"/><rect x="114.0" y="91.2" width="4.1" height="6.4" fill="#8a8078"/><rect x="281.4" y="107.9" width="6.7" height="9.0" fill="#d0a890"/><rect x="236.1" y="92.6" width="12.8" height="4.5" fill="#d0a890"/><rect x="158.7" y="79.6" width="5.9" height="3.3" fill="#9a9088"/><rect x="275.7" y="101.2" width="9.3" height="3.7" fill="#8a5050"/><rect x="314.7" y="105.2" width="6.3" height="3.4" fill="#a05a5a"/><rect x="270.4" y="108.4" width="10.9" height="7.9" fill="#d0a890"/><rect x="323.2" y="97.6" width="5.6" height="7.1" fill="#d88a80"/><rect x="113.1" y="100.5" width="10.3" height="3.9" fill="#9a9088"/><rect x="261.5" y="97.5" width="8.1" height="6.2" fill="#c87070"/><rect x="214.0" y="94.8" width="5.8" height="10.0" fill="#e0a898"/><rect x="126.0" y="97.8" width="5.3" height="4.1" fill="#6a625c"/><rect x="208.9" y="104.3" width="7.0" height="7.4" fill="#8a8078"/><rect x="142.8" y="107.3" width="4.6" height="4.8" fill="#a09890"/><rect x="139.2" y="86.5" width="7.7" height="9.6" fill="#b0a098"/><rect x="161.7" y="100.4" width="11.5" height="6.6" fill="#786e68"/><rect x="192.4" y="83.6" width="11.9" height="9.0" fill="#786e68"/><rect x="277.1" y="98.5" width="4.6" height="9.6" fill="#d88a80"/><rect x="256.0" y="103.1" width="9.4" height="3.1" fill="#a05a5a"/><rect x="153.6" y="103.7" width="8.0" height="3.4" fill="#8a8078"/><rect x="289.0" y="93.4" width="4.2" height="9.9" fill="#d88a80"/><rect x="123.6" y="92.3" width="6.9" height="7.6" fill="#6a625c"/><rect x="207.9" y="79.0" width="8.6" height="5.4" fill="#8a8078"/><rect x="272.7" y="108.9" width="7.7" height="3.3" fill="#a05a5a"/><rect x="209.7" y="89.6" width="9.0" height="8.1" fill="#b06a66"/><rect x="189.8" y="112.2" width="4.1" height="4.3" fill="#6a625c"/><rect x="331.3" y="113.9" width="10.5" height="7.2" fill="#c87a74"/><rect x="191.3" y="94.3" width="10.1" height="9.5" fill="#786e68"/><rect x="317.2" y="85.3" width="9.1" height="5.6" fill="#c87a74"/><rect x="326.7" y="78.6" width="9.3" height="5.2" fill="#c87070"/><rect x="327.2" y="90.7" width="8.6" height="5.3" fill="#c87070"/><rect x="196.4" y="89.0" width="10.9" height="3.5" fill="#8a8078"/><rect x="301.4" y="88.9" width="5.8" height="3.7" fill="#c87070"/><rect x="162.4" y="81.2" width="7.1" height="4.6" fill="#786e68"/><rect x="321.9" y="82.4" width="5.1" height="3.9" fill="#d08a80"/><rect x="116.6" y="112.1" width="5.9" height="4.6" fill="#b0a098"/><rect x="162.5" y="78.3" width="11.8" height="5.7" fill="#a09890"/><rect x="289.9" y="108.4" width="11.2" height="4.6" fill="#a05a5a"/><rect x="196.4" y="104.7" width="4.4" height="5.3" fill="#6a625c"/><rect x="260.9" y="100.2" width="4.0" height="3.8" fill="#b06a66"/><rect x="182.9" y="101.1" width="10.6" height="8.4" fill="#a07070"/><rect x="281.5" y="100.4" width="8.1" height="9.8" fill="#d88a80"/><rect x="168.2" y="95.5" width="9.1" height="7.7" fill="#6a625c"/><rect x="276.1" y="77.9" width="8.8" height="6.5" fill="#c87070"/><rect x="123.1" y="104.7" width="7.1" height="5.3" fill="#6a625c"/><rect x="123.8" y="113.2" width="5.5" height="7.8" fill="#8a8078"/><rect x="201.7" y="104.1" width="9.3" height="4.9" fill="#d0a890"/><rect x="336.6" y="103.4" width="6.2" height="4.2" fill="#e0a898"/><rect x="215.1" y="105.0" width="4.2" height="4.4" fill="#d0a890"/><rect x="225.4" y="92.6" width="4.2" height="3.6" fill="#8a8078"/><rect x="132.4" y="85.5" width="9.0" height="5.7" fill="#b0a098"/><rect x="280.6" y="109.6" width="4.2" height="7.2" fill="#d88a80"/><rect x="287.4" y="80.6" width="10.6" height="8.3" fill="#b06a66"/><rect x="126.9" y="85.3" width="11.3" height="9.8" fill="#8a8078"/><rect x="307.4" y="78.8" width="8.2" height="7.1" fill="#d08a80"/><rect x="160.9" y="89.3" width="6.7" height="7.9" fill="#b0a098"/><rect x="325.7" y="109.2" width="12.6" height="3.6" fill="#c87a74"/><rect x="187.6" y="89.7" width="5.7" height="8.6" fill="#9a9088"/><rect x="216.5" y="94.8" width="8.6" height="7.1" fill="#9a9088"/><rect x="320.0" y="78.9" width="8.4" height="4.1" fill="#8a5050"/><rect x="134.4" y="106.5" width="10.9" height="6.0" fill="#5a524e"/><rect x="298.7" y="95.6" width="4.9" height="3.6" fill="#e0a898"/><rect x="216.4" y="77.3" width="11.0" height="9.7" fill="#c87a74"/><rect x="245.9" y="102.1" width="4.8" height="9.8" fill="#8a8078"/><rect x="126.4" y="102.6" width="10.1" height="6.1" fill="#786e68"/><rect x="324.5" y="101.9" width="8.3" height="9.8" fill="#d0a890"/><rect x="288.9" y="97.1" width="10.8" height="8.4" fill="#c89080"/><rect x="283.8" y="109.5" width="5.3" height="6.7" fill="#d88a80"/><rect x="120.7" y="111.3" width="12.1" height="4.1" fill="#9a9088"/><rect x="117.7" y="109.9" width="8.2" height="4.6" fill="#9a9088"/><rect x="173.9" y="96.3" width="4.1" height="9.8" fill="#9a9088"/><rect x="275.7" y="108.0" width="7.8" height="5.9" fill="#c87070"/><rect x="158.3" y="77.9" width="10.3" height="9.1" fill="#6a625c"/><rect x="155.1" y="97.5" width="4.3" height="7.9" fill="#5a524e"/><rect x="333.0" y="110.8" width="11.5" height="5.1" fill="#d88a80"/><rect x="311.1" y="76.3" width="4.7" height="9.9" fill="#c87a74"/><rect x="272.6" y="106.2" width="5.7" height="9.3" fill="#e0a898"/><rect x="313.2" y="100.6" width="5.1" height="8.8" fill="#a05a5a"/><rect x="210.8" y="88.9" width="9.5" height="8.2" fill="#c87a74"/><rect x="276.3" y="91.4" width="11.0" height="7.8" fill="#e0a898"/><rect x="249.5" y="101.7" width="6.4" height="9.5" fill="#d88a80"/><rect x="309.1" y="105.8" width="10.7" height="4.2" fill="#c89080"/><rect x="174.7" y="77.3" width="9.2" height="7.0" fill="#786e68"/><rect x="312.2" y="76.6" width="9.2" height="4.1" fill="#8a5050"/><rect x="113.4" y="84.3" width="4.4" height="4.7" fill="#a07070"/><rect x="218.0" y="84.9" width="10.2" height="9.1" fill="#e0a898"/><rect x="192.9" y="93.5" width="6.0" height="4.2" fill="#786e68"/><rect x="307.1" y="91.4" width="9.7" height="7.2" fill="#c87070"/><rect x="227.2" y="91.4" width="8.0" height="7.5" fill="#6a625c"/><rect x="239.3" y="87.0" width="8.6" height="4.3" fill="#6a625c"/><rect x="224.7" y="82.3" width="5.8" height="6.5" fill="#d0a890"/><rect x="287.0" y="96.7" width="4.2" height="5.3" fill="#c87a74"/><rect x="201.5" y="85.0" width="10.8" height="3.7" fill="#8a8078"/><rect x="264.1" y="108.3" width="4.9" height="9.5" fill="#8a5050"/><rect x="300.2" y="91.2" width="7.9" height="7.0" fill="#e0a898"/><rect x="191.6" y="86.5" width="4.1" height="6.7" fill="#6a625c"/><rect x="137.8" y="105.8" width="5.6" height="4.8" fill="#5a524e"/><rect x="207.8" y="110.9" width="9.1" height="7.6" fill="#5a524e"/><rect x="258.0" y="112.2" width="10.3" height="8.7" fill="#c87070"/><rect x="123.4" y="94.5" width="10.2" height="5.3" fill="#6a625c"/><rect x="133.3" y="92.1" width="12.5" height="4.0" fill="#b0a098"/><rect x="308.1" y="99.2" width="10.8" height="3.8" fill="#c87070"/><rect x="207.6" y="83.3" width="7.6" height="7.7" fill="#6a625c"/><rect x="312.4" y="109.7" width="8.6" height="4.8" fill="#c87a74"/><rect x="304.9" y="106.1" width="10.0" height="7.4" fill="#d88a80"/><rect x="262.4" y="85.1" width="10.7" height="6.5" fill="#d0a890"/><rect x="209.5" y="106.9" width="9.9" height="7.7" fill="#d08a80"/><rect x="307.7" y="95.1" width="7.5" height="7.1" fill="#b06a66"/><rect x="309.5" y="85.1" width="6.7" height="6.3" fill="#c89080"/><rect x="219.6" y="98.3" width="12.3" height="7.2" fill="#b06a66"/><rect x="149.1" y="86.7" width="8.6" height="8.1" fill="#8a8078"/><rect x="211.3" y="111.1" width="8.3" height="7.4" fill="#6a625c"/><rect x="297.4" y="110.4" width="12.9" height="9.7" fill="#e0a898"/><rect x="120.2" y="98.0" width="11.0" height="8.7" fill="#8a8078"/><rect x="256.3" y="113.3" width="7.4" height="6.0" fill="#c87070"/><rect x="294.1" y="83.1" width="7.6" height="8.4" fill="#d08a80"/><rect x="176.6" y="108.0" width="4.4" height="9.0" fill="#9a9088"/><rect x="281.2" y="87.5" width="11.6" height="7.2" fill="#d0a890"/><rect x="166.1" y="108.8" width="5.6" height="3.8" fill="#786e68"/><rect x="255.6" y="94.8" width="10.7" height="6.6" fill="#d08a80"/><rect x="311.5" y="81.0" width="2.1" height="8.0" fill="#3a3034" opacity="0.85"/><rect x="132.0" y="114.0" width="1.8" height="3.6" fill="#2a2228" opacity="0.85"/><rect x="129.7" y="107.9" width="5.1" height="2.1" fill="#3a3034" opacity="0.85"/><rect x="243.2" y="92.9" width="1.2" height="3.3" fill="#2a2228" opacity="0.85"/><rect x="249.4" y="88.7" width="4.9" height="2.1" fill="#4a3a3e" opacity="0.85"/><rect x="290.0" y="96.9" width="2.7" height="2.3" fill="#3a3034" opacity="0.85"/><rect x="174.9" y="103.7" width="5.9" height="2.5" fill="#3a3034" opacity="0.85"/><rect x="301.1" y="93.9" width="2.9" height="2.5" fill="#3a3034" opacity="0.85"/><rect x="258.9" y="104.7" width="5.8" height="1.9" fill="#2a2228" opacity="0.85"/><rect x="302.0" y="82.7" width="3.9" height="2.3" fill="#3a3034" opacity="0.85"/><rect x="220.3" y="87.6" width="1.6" height="7.5" fill="#20202a" opacity="0.85"/><rect x="207.8" y="90.3" width="1.3" height="7.5" fill="#2a2228" opacity="0.85"/><rect x="268.1" y="91.1" width="3.4" height="2.0" fill="#2a2228" opacity="0.85"/><rect x="236.6" y="103.6" width="1.7" height="4.6" fill="#2a2228" opacity="0.85"/><rect x="140.1" y="105.1" width="1.8" height="4.2" fill="#4a3a3e" opacity="0.85"/><rect x="290.9" y="95.5" width="5.6" height="1.4" fill="#20202a" opacity="0.85"/><rect x="266.5" y="103.4" width="2.6" height="1.6" fill="#3a3034" opacity="0.85"/><rect x="233.0" y="113.5" width="1.3" height="7.7" fill="#4a3a3e" opacity="0.85"/><rect x="244.8" y="86.6" width="3.2" height="1.9" fill="#3a3034" opacity="0.85"/><rect x="236.0" y="105.7" width="4.5" height="1.0" fill="#20202a" opacity="0.85"/><rect x="190.5" y="99.3" width="4.3" height="2.4" fill="#3a3034" opacity="0.85"/><rect x="144.3" y="107.2" width="2.1" height="1.8" fill="#4a3a3e" opacity="0.85"/><rect x="276.0" y="100.6" width="1.9" height="3.2" fill="#2a2228" opacity="0.85"/><rect x="238.8" y="78.9" width="1.7" height="3.1" fill="#3a3034" opacity="0.85"/><rect x="201.9" y="80.4" width="3.2" height="1.0" fill="#20202a" opacity="0.85"/><rect x="195.1" y="80.2" width="4.7" height="2.1" fill="#4a3a3e" opacity="0.85"/><rect x="309.1" y="90.2" width="1.1" height="7.2" fill="#20202a" opacity="0.85"/><rect x="137.3" y="103.4" width="2.1" height="1.9" fill="#4a3a3e" opacity="0.85"/><rect x="277.5" y="94.1" width="5.0" height="1.5" fill="#4a3a3e" opacity="0.85"/><rect x="281.6" y="98.3" width="1.2" height="6.0" fill="#2a2228" opacity="0.85"/><rect x="324.8" y="76.6" width="1.4" height="4.1" fill="#4a3a3e" opacity="0.85"/><rect x="293.0" y="78.5" width="1.6" height="5.1" fill="#20202a" opacity="0.85"/><rect x="275.5" y="100.7" width="1.1" height="4.1" fill="#3a3034" opacity="0.85"/><rect x="128.1" y="109.0" width="1.6" height="6.1" fill="#2a2228" opacity="0.85"/><rect x="154.7" y="100.8" width="5.1" height="2.3" fill="#4a3a3e" opacity="0.85"/><rect x="215.5" y="83.1" width="1.4" height="5.9" fill="#20202a" opacity="0.85"/><rect x="269.4" y="82.2" width="2.1" height="3.2" fill="#3a3034" opacity="0.85"/><rect x="331.1" y="82.0" width="3.5" height="2.2" fill="#3a3034" opacity="0.85"/><rect x="268.8" y="86.6" width="5.1" height="2.3" fill="#2a2228" opacity="0.85"/><rect x="278.7" y="85.6" width="1.1" height="6.8" fill="#4a3a3e" opacity="0.85"/><rect x="209.2" y="108.4" width="1.2" height="6.5" fill="#20202a" opacity="0.85"/><rect x="315.4" y="107.3" width="1.3" height="5.2" fill="#3a3034" opacity="0.85"/><rect x="264.4" y="91.1" width="1.4" height="7.1" fill="#4a3a3e" opacity="0.85"/><rect x="160.4" y="94.6" width="1.4" height="4.2" fill="#20202a" opacity="0.85"/><rect x="313.3" y="109.9" width="1.8" height="6.6" fill="#20202a" opacity="0.85"/><rect x="207.6" y="87.7" width="2.0" height="7.6" fill="#2a2228" opacity="0.85"/><rect x="320.2" y="84.4" width="1.7" height="9.0" fill="#4a3a3e" opacity="0.85"/><rect x="246.3" y="94.3" width="2.0" height="1.7" fill="#20202a" opacity="0.85"/><rect x="212.4" y="100.4" width="5.2" height="2.2" fill="#20202a" opacity="0.85"/><rect x="314.3" y="90.5" width="4.0" height="1.6" fill="#4a3a3e" opacity="0.85"/><rect x="250.9" y="112.9" width="4.8" height="2.0" fill="#20202a" opacity="0.85"/><rect x="220.8" y="94.3" width="5.1" height="2.3" fill="#2a2228" opacity="0.85"/><rect x="142.1" y="84.6" width="5.8" height="1.3" fill="#3a3034" opacity="0.85"/><rect x="307.6" y="91.7" width="1.3" height="3.9" fill="#3a3034" opacity="0.85"/><rect x="237.6" y="80.9" width="1.0" height="3.2" fill="#4a3a3e" opacity="0.85"/><rect x="246.8" y="94.6" width="5.4" height="1.8" fill="#20202a" opacity="0.85"/><rect x="133.9" y="82.0" width="1.3" height="8.4" fill="#20202a" opacity="0.85"/><rect x="219.9" y="103.1" width="5.7" height="2.4" fill="#2a2228" opacity="0.85"/><rect x="321.0" y="82.7" width="1.9" height="6.6" fill="#20202a" opacity="0.85"/><rect x="301.5" y="97.4" width="1.0" height="5.2" fill="#4a3a3e" opacity="0.85"/><rect x="262.3" y="99.5" width="1.1" height="5.5" fill="#20202a" opacity="0.85"/><rect x="197.6" y="86.8" width="4.7" height="2.1" fill="#3a3034" opacity="0.85"/><rect x="301.3" y="88.1" width="2.5" height="1.2" fill="#4a3a3e" opacity="0.85"/><rect x="333.8" y="80.8" width="4.0" height="1.7" fill="#20202a" opacity="0.85"/><rect x="331.3" y="89.1" width="2.7" height="1.5" fill="#4a3a3e" opacity="0.85"/><rect x="318.7" y="98.0" width="4.0" height="2.0" fill="#20202a" opacity="0.85"/><rect x="310.6" y="105.1" width="3.7" height="2.1" fill="#2a2228" opacity="0.85"/><rect x="279.2" y="100.0" width="1.3" height="7.1" fill="#3a3034" opacity="0.85"/><rect x="253.5" y="107.8" width="2.3" height="1.5" fill="#2a2228" opacity="0.85"/><rect x="243.5" y="104.6" width="5.3" height="2.1" fill="#3a3034" opacity="0.85"/><rect x="272.7" y="80.8" width="4.6" height="1.5" fill="#2a2228" opacity="0.85"/><rect x="290.3" y="101.9" width="1.9" height="6.8" fill="#20202a" opacity="0.85"/><rect x="244.7" y="93.0" width="4.4" height="1.3" fill="#2a2228" opacity="0.85"/><rect x="165.5" y="88.9" width="1.6" height="6.5" fill="#3a3034" opacity="0.85"/><rect x="131.8" y="95.0" width="3.1" height="2.1" fill="#20202a" opacity="0.85"/><rect x="162.1" y="83.3" width="3.4" height="2.1" fill="#4a3a3e" opacity="0.85"/><rect x="142.9" y="88.0" width="3.8" height="1.7" fill="#2a2228" opacity="0.85"/><rect x="120.4" y="98.0" width="6.0" height="1.5" fill="#4a3a3e" opacity="0.85"/><rect x="272.9" y="110.6" width="1.3" height="6.4" fill="#4a3a3e" opacity="0.85"/><rect x="239.5" y="109.1" width="3.2" height="1.6" fill="#20202a" opacity="0.85"/><rect x="273.7" y="93.4" width="4.0" height="1.7" fill="#2a2228" opacity="0.85"/><rect x="262.6" y="93.5" width="1.7" height="8.6" fill="#2a2228" opacity="0.85"/><rect x="295.1" y="109.0" width="2.0" height="5.1" fill="#4a3a3e" opacity="0.85"/><rect x="241.2" y="109.4" width="4.8" height="2.5" fill="#20202a" opacity="0.85"/><rect x="274.6" y="84.0" width="2.0" height="8.9" fill="#20202a" opacity="0.85"/><rect x="209.5" y="80.5" width="4.5" height="1.1" fill="#4a3a3e" opacity="0.85"/><rect x="187.7" y="99.2" width="1.1" height="3.4" fill="#20202a" opacity="0.85"/><rect x="191.9" y="80.5" width="1.3" height="4.1" fill="#2a2228" opacity="0.85"/><rect x="320.0" y="78.0" width="5.5" height="2.1" fill="#2a2228" opacity="0.85"/><rect x="330.4" y="80.6" width="3.1" height="2.2" fill="#4a3a3e" opacity="0.85"/><rect x="311.4" y="101.6" width="2.7" height="2.3" fill="#4a3a3e" opacity="0.85"/><rect x="269.2" y="78.6" width="2.6" height="1.6" fill="#3a3034" opacity="0.85"/><rect x="127.2" y="104.0" width="5.4" height="1.7" fill="#2a2228" opacity="0.85"/><rect x="305.4" y="87.4" width="1.1" height="6.2" fill="#3a3034" opacity="0.85"/><rect x="239.5" y="97.2" width="5.6" height="1.4" fill="#2a2228" opacity="0.85"/><rect x="259.1" y="113.2" width="5.0" height="2.2" fill="#2a2228" opacity="0.85"/><rect x="113.2" y="94.4" width="1.4" height="5.1" fill="#3a3034" opacity="0.85"/><rect x="174.2" y="79.2" width="1.0" height="8.6" fill="#20202a" opacity="0.85"/><rect x="135.0" y="94.3" width="5.6" height="1.4" fill="#20202a" opacity="0.85"/><rect x="180.5" y="80.8" width="1.3" height="3.8" fill="#2a2228" opacity="0.85"/><rect x="312.2" y="94.6" width="5.5" height="2.5" fill="#20202a" opacity="0.85"/><rect x="255.6" y="101.8" width="4.6" height="2.1" fill="#4a3a3e" opacity="0.85"/><rect x="294.3" y="107.5" width="2.1" height="5.4" fill="#2a2228" opacity="0.85"/><rect x="126.5" y="99.8" width="4.3" height="1.8" fill="#20202a" opacity="0.85"/><rect x="237.5" y="86.8" width="4.1" height="1.6" fill="#20202a" opacity="0.85"/><rect x="263.7" y="104.1" width="4.3" height="2.1" fill="#20202a" opacity="0.85"/><rect x="228.1" y="77.7" width="1.4" height="8.0" fill="#3a3034" opacity="0.85"/><rect x="268.5" y="106.9" width="3.9" height="1.1" fill="#20202a" opacity="0.85"/><rect x="284.8" y="97.9" width="4.2" height="1.3" fill="#4a3a3e" opacity="0.85"/><rect x="247.5" y="92.9" width="5.4" height="1.1" fill="#4a3a3e" opacity="0.85"/><rect x="172.3" y="76.0" width="4.1" height="1.3" fill="#2a2228" opacity="0.85"/><rect x="181.3" y="82.2" width="4.9" height="1.2" fill="#4a3a3e" opacity="0.85"/><rect x="312.8" y="90.4" width="2.8" height="1.7" fill="#20202a" opacity="0.85"/><rect x="182.7" y="82.2" width="4.3" height="1.8" fill="#20202a" opacity="0.85"/><rect x="269.5" y="98.4" width="1.4" height="3.9" fill="#2a2228" opacity="0.85"/><rect x="185.7" y="92.3" width="5.0" height="1.6" fill="#3a3034" opacity="0.85"/><rect x="305.7" y="101.4" width="1.3" height="6.7" fill="#2a2228" opacity="0.85"/><rect x="202.8" y="80.3" width="1.8" height="4.2" fill="#3a3034" opacity="0.85"/><rect x="238.1" y="79.5" width="5.5" height="1.1" fill="#20202a" opacity="0.85"/><rect x="198.6" y="106.9" width="2.3" height="1.4" fill="#2a2228" opacity="0.85"/><rect x="120.2" y="81.7" width="1.6" height="6.0" fill="#3a3034" opacity="0.85"/><rect x="121.3" y="87.5" width="2.3" height="1.4" fill="#20202a" opacity="0.85"/><rect x="335.3" y="97.6" width="3.0" height="2.2" fill="#20202a" opacity="0.85"/><rect x="327.8" y="83.8" width="5.8" height="2.1" fill="#3a3034" opacity="0.85"/><rect x="212.7" y="109.6" width="2.7" height="2.3" fill="#4a3a3e" opacity="0.85"/><rect x="121.2" y="89.4" width="1.5" height="6.4" fill="#3a3034" opacity="0.85"/><rect x="135.9" y="78.7" width="4.4" height="2.3" fill="#2a2228" opacity="0.85"/><rect x="209.7" y="92.8" width="4.1" height="1.9" fill="#4a3a3e" opacity="0.85"/><rect x="112.2" y="92.0" width="1.9" height="7.2" fill="#20202a" opacity="0.85"/><rect x="222.3" y="78.4" width="4.2" height="1.1" fill="#20202a" opacity="0.85"/><rect x="127.5" y="105.5" width="4.4" height="1.3" fill="#20202a" opacity="0.85"/><rect x="162.6" y="109.7" width="1.7" height="8.7" fill="#3a3034" opacity="0.85"/><rect x="135.4" y="111.7" width="2.4" height="2.4" fill="#2a2228" opacity="0.85"/><rect x="269.5" y="94.9" width="2.1" height="8.4" fill="#2a2228" opacity="0.85"/><rect x="220.6" y="78.3" width="3.6" height="1.7" fill="#3a3034" opacity="0.85"/><rect x="229.4" y="103.5" width="3.5" height="2.1" fill="#2a2228" opacity="0.85"/><rect x="214.0" y="100.2" width="1.6" height="6.8" fill="#20202a" opacity="0.85"/><rect x="241.4" y="106.9" width="2.1" height="7.0" fill="#2a2228" opacity="0.85"/><rect x="209.9" y="90.7" width="2.6" height="1.4" fill="#20202a" opacity="0.85"/><rect x="120.3" y="76.9" width="5.0" height="2.3" fill="#2a2228" opacity="0.85"/><rect x="320.6" y="93.8" width="1.4" height="5.5" fill="#4a3a3e" opacity="0.85"/><rect x="229.9" y="81.2" width="1.4" height="5.1" fill="#4a3a3e" opacity="0.85"/><rect x="151.8" y="86.9" width="4.2" height="2.1" fill="#3a3034" opacity="0.85"/><rect x="212.1" y="96.8" width="5.2" height="1.7" fill="#3a3034" opacity="0.85"/><rect x="292.1" y="113.1" width="5.7" height="1.8" fill="#4a3a3e" opacity="0.85"/><rect x="256.5" y="90.7" width="2.0" height="4.3" fill="#4a3a3e" opacity="0.85"/><rect x="117.4" y="98.3" width="1.2" height="6.5" fill="#20202a" opacity="0.85"/><rect x="304.7" y="95.1" width="5.5" height="2.1" fill="#2a2228" opacity="0.85"/><rect x="323.6" y="94.2" width="2.0" height="8.8" fill="#20202a" opacity="0.85"/><rect x="243.1" y="86.8" width="2.0" height="7.5" fill="#4a3a3e" opacity="0.85"/><rect x="250.7" y="80.8" width="3.1" height="1.4" fill="#2a2228" opacity="0.85"/><rect x="317.1" y="93.0" width="4.8" height="1.2" fill="#2a2228" opacity="0.85"/><rect x="330.0" y="104.3" width="1.7" height="4.8" fill="#20202a" opacity="0.85"/><rect x="273.0" y="107.0" width="3.9" height="2.2" fill="#3a3034" opacity="0.85"/><rect x="221.1" y="99.0" width="2.0" height="8.6" fill="#4a3a3e" opacity="0.85"/><rect x="224.0" y="85.3" width="5.7" height="2.2" fill="#4a3a3e" opacity="0.85"/><rect x="256.5" y="99.9" width="5.6" height="1.8" fill="#4a3a3e" opacity="0.85"/><rect x="236.5" y="97.6" width="1.1" height="6.1" fill="#20202a" opacity="0.85"/><rect x="319.6" y="109.3" width="2.2" height="7.2" fill="#4a3a3e" opacity="0.85"/><rect x="232.5" y="94.5" width="1.2" height="4.6" fill="#2a2228" opacity="0.85"/><rect x="140.3" y="105.2" width="4.5" height="1.7" fill="#4a3a3e" opacity="0.85"/><rect x="154.4" y="85.1" width="1.2" height="7.4" fill="#2a2228" opacity="0.85"/><rect x="331.8" y="95.2" width="3.1" height="1.4" fill="#2a2228" opacity="0.85"/><rect x="112.5" y="113.0" width="1.3" height="6.3" fill="#20202a" opacity="0.85"/><rect x="145.8" y="88.6" width="4.1" height="1.3" fill="#4a3a3e" opacity="0.85"/><rect x="264.4" y="80.2" width="1.2" height="7.4" fill="#2a2228" opacity="0.85"/><rect x="311.7" y="88.4" width="4.2" height="1.3" fill="#20202a" opacity="0.85"/><rect x="300.2" y="82.6" width="1.4" height="4.4" fill="#4a3a3e" opacity="0.85"/><rect x="234.6" y="97.7" width="1.2" height="4.6" fill="#20202a" opacity="0.85"/><rect x="310.7" y="99.5" width="2.2" height="5.7" fill="#4a3a3e" opacity="0.85"/><rect x="314.5" y="83.0" width="3.2" height="2.9" fill="#eeeeee" opacity="0.8"/><rect x="309.0" y="78.5" width="4.0" height="3.1" fill="#eeeeee" opacity="0.8"/><rect x="277.5" y="88.5" width="4.9" height="2.2" fill="#eeeeee" opacity="0.8"/><rect x="320.1" y="103.4" width="3.4" height="2.1" fill="#eeeeee" opacity="0.8"/><rect x="278.1" y="112.5" width="4.9" height="2.2" fill="#eeeeee" opacity="0.8"/><rect x="311.1" y="113.6" width="2.4" height="3.9" fill="#eeeeee" opacity="0.8"/><rect x="304.6" y="81.6" width="2.9" height="3.2" fill="#eeeeee" opacity="0.8"/><rect x="261.3" y="86.0" width="4.5" height="2.4" fill="#eeeeee" opacity="0.8"/><rect x="319.6" y="111.3" width="4.8" height="2.1" fill="#eeeeee" opacity="0.8"/><rect x="277.2" y="89.6" width="3.4" height="2.0" fill="#eeeeee" opacity="0.8"/><rect x="297.1" y="81.2" width="4.6" height="3.3" fill="#eeeeee" opacity="0.8"/><rect x="278.0" y="99.2" width="2.6" height="3.8" fill="#eeeeee" opacity="0.8"/><rect x="293.3" y="92.5" width="3.5" height="2.5" fill="#eeeeee" opacity="0.8"/><rect x="273.7" y="111.9" width="4.4" height="3.1" fill="#eeeeee" opacity="0.8"/><rect x="253.0" y="99.1" width="4.6" height="2.1" fill="#eeeeee" opacity="0.8"/><rect x="279.0" y="113.0" width="4.8" height="2.6" fill="#eeeeee" opacity="0.8"/><rect x="251.5" y="87.5" width="3.0" height="2.3" fill="#eeeeee" opacity="0.8"/><rect x="296.9" y="100.3" width="4.3" height="3.5" fill="#eeeeee" opacity="0.8"/><rect x="310.1" y="79.8" width="3.1" height="2.9" fill="#eeeeee" opacity="0.8"/><rect x="309.7" y="76.3" width="3.7" height="3.2" fill="#eeeeee" opacity="0.8"/><rect x="303.6" y="109.5" width="4.3" height="2.1" fill="#eeeeee" opacity="0.8"/><rect x="332.1" y="86.1" width="2.8" height="2.9" fill="#eeeeee" opacity="0.8"/><rect x="331.0" y="87.4" width="2.6" height="2.6" fill="#eeeeee" opacity="0.8"/><rect x="250.8" y="87.9" width="3.0" height="3.7" fill="#eeeeee" opacity="0.8"/><rect x="322.3" y="79.2" width="3.6" height="3.6" fill="#eeeeee" opacity="0.8"/><rect x="254.2" y="82.0" width="3.8" height="2.7" fill="#eeeeee" opacity="0.8"/><rect x="327.8" y="95.4" width="4.7" height="3.1" fill="#eeeeee" opacity="0.8"/><rect x="309.1" y="76.7" width="3.7" height="2.7" fill="#eeeeee" opacity="0.8"/><rect x="246" y="78" width="6" height="38" fill="#55556a"/><rect x="337.5" y="78" width="2.5" height="38" fill="#3a3a52"/><rect x="146" y="104" width="12" height="12" fill="#2d4a2a" opacity="0.9"/></g><g filter="url(#mb2)"><rect x="66.9" y="86.5" width="10.1" height="5.0" fill="#485040" opacity="0.8"/><rect x="97.5" y="102.3" width="6.0" height="3.9" fill="#2e3428" opacity="0.8"/><rect x="36.9" y="93.0" width="4.1" height="7.2" fill="#3a4232" opacity="0.8"/><rect x="68.5" y="96.0" width="5.2" height="6.9" fill="#585c50" opacity="0.8"/><rect x="96.7" y="81.2" width="5.9" height="6.2" fill="#485040" opacity="0.8"/><rect x="43.8" y="96.3" width="10.4" height="5.1" fill="#3a4232" opacity="0.8"/><rect x="58.9" y="93.9" width="10.0" height="5.7" fill="#3a4232" opacity="0.8"/><rect x="65.1" y="91.6" width="5.0" height="4.6" fill="#283222" opacity="0.8"/><rect x="99.0" y="97.5" width="10.7" height="6.9" fill="#585c50" opacity="0.8"/><rect x="89.5" y="93.0" width="7.2" height="4.6" fill="#485040" opacity="0.8"/><rect x="47.0" y="87.7" width="11.9" height="8.2" fill="#283222" opacity="0.8"/><rect x="81.5" y="86.2" width="5.0" height="3.5" fill="#283222" opacity="0.8"/><rect x="65.9" y="79.1" width="9.0" height="5.4" fill="#585c50" opacity="0.8"/><rect x="98.0" y="78.0" width="4.1" height="6.0" fill="#3a4232" opacity="0.8"/><rect x="87.9" y="83.6" width="4.7" height="3.4" fill="#3a4232" opacity="0.8"/><rect x="88.5" y="81.5" width="11.8" height="7.9" fill="#585c50" opacity="0.8"/><rect x="37.8" y="83.8" width="7.9" height="3.7" fill="#2e3428" opacity="0.8"/><rect x="43.9" y="78.5" width="11.6" height="8.9" fill="#585c50" opacity="0.8"/><rect x="64.1" y="86.4" width="9.7" height="4.9" fill="#485040" opacity="0.8"/><rect x="48.1" y="78.9" width="6.5" height="5.3" fill="#2e3428" opacity="0.8"/><rect x="72.0" y="88.0" width="11.6" height="3.0" fill="#2e3428" opacity="0.8"/><rect x="43.4" y="82.8" width="5.1" height="8.8" fill="#3a4232" opacity="0.8"/><rect x="53.6" y="101.5" width="6.7" height="3.4" fill="#2e3428" opacity="0.8"/><rect x="73.2" y="79.1" width="8.1" height="5.4" fill="#585c50" opacity="0.8"/><rect x="103.2" y="94.5" width="7.6" height="6.7" fill="#2e3428" opacity="0.8"/><rect x="62.3" y="94.2" width="7.3" height="4.1" fill="#485040" opacity="0.8"/><rect x="80.6" y="78.8" width="8.6" height="9.0" fill="#485040" opacity="0.8"/><rect x="68.1" y="101.6" width="7.5" height="5.4" fill="#3a4232" opacity="0.8"/><rect x="37.5" y="91.2" width="10.9" height="8.9" fill="#485040" opacity="0.8"/><rect x="40.1" y="95.8" width="4.7" height="5.4" fill="#585c50" opacity="0.8"/><rect x="82.0" y="95.0" width="7.5" height="6.3" fill="#2e3428" opacity="0.8"/><rect x="48.0" y="87.3" width="9.4" height="3.1" fill="#283222" opacity="0.8"/><rect x="84.8" y="81.3" width="6.0" height="8.5" fill="#283222" opacity="0.8"/><rect x="99.7" y="81.6" width="8.7" height="3.2" fill="#2e3428" opacity="0.8"/><rect x="63.1" y="102.7" width="11.0" height="4.5" fill="#3a4232" opacity="0.8"/><rect x="104.1" y="80.9" width="10.8" height="4.8" fill="#3a4232" opacity="0.8"/><rect x="91.2" y="89.7" width="8.8" height="7.5" fill="#3a4232" opacity="0.8"/><rect x="79.7" y="80.5" width="6.9" height="7.5" fill="#3a4232" opacity="0.8"/><rect x="63.2" y="94.6" width="10.0" height="6.2" fill="#3a4232" opacity="0.8"/><rect x="90.8" y="91.5" width="11.9" height="4.2" fill="#283222" opacity="0.8"/><rect x="66.6" y="95.5" width="7.0" height="6.1" fill="#3a4232" opacity="0.8"/><rect x="82.5" y="90.9" width="7.1" height="6.2" fill="#585c50" opacity="0.8"/><rect x="79.8" y="85.1" width="5.5" height="5.4" fill="#485040" opacity="0.8"/><rect x="103.9" y="98.5" width="6.4" height="3.1" fill="#485040" opacity="0.8"/><rect x="69.5" y="96.2" width="7.4" height="3.7" fill="#585c50" opacity="0.8"/><rect x="47.7" y="96.6" width="8.7" height="7.6" fill="#3a4232" opacity="0.8"/><rect x="95.8" y="100.2" width="10.5" height="7.2" fill="#3a4232" opacity="0.8"/><rect x="50.7" y="89.4" width="9.4" height="8.0" fill="#585c50" opacity="0.8"/><rect x="62.0" y="82.9" width="9.1" height="7.0" fill="#2e3428" opacity="0.8"/><rect x="90.5" y="102.1" width="8.7" height="4.0" fill="#283222" opacity="0.8"/><rect x="104.8" y="87.8" width="4.3" height="7.1" fill="#283222" opacity="0.8"/><rect x="83.6" y="92.8" width="6.3" height="7.8" fill="#3a4232" opacity="0.8"/><rect x="97.9" y="93.7" width="11.9" height="8.2" fill="#2e3428" opacity="0.8"/><rect x="57.5" y="97.5" width="7.7" height="8.8" fill="#3a4232" opacity="0.8"/><rect x="51.0" y="90.4" width="4.6" height="7.0" fill="#283222" opacity="0.8"/><rect x="64.9" y="84.5" width="5.5" height="3.5" fill="#585c50" opacity="0.8"/><rect x="77.4" y="80.0" width="6.1" height="7.4" fill="#585c50" opacity="0.8"/><rect x="90.7" y="100.9" width="8.5" height="8.5" fill="#2e3428" opacity="0.8"/><rect x="49.8" y="89.8" width="10.8" height="4.9" fill="#485040" opacity="0.8"/><rect x="86.9" y="86.2" width="7.2" height="8.6" fill="#485040" opacity="0.8"/><rect x="38.2" y="100.2" width="5.7" height="5.6" fill="#2e3428" opacity="0.8"/><rect x="90.7" y="90.9" width="4.1" height="8.3" fill="#3a4232" opacity="0.8"/><rect x="52.5" y="94.3" width="4.9" height="5.4" fill="#585c50" opacity="0.8"/><rect x="51.0" y="85.6" width="7.0" height="4.2" fill="#283222" opacity="0.8"/><rect x="54.0" y="90.7" width="4.4" height="4.6" fill="#283222" opacity="0.8"/><rect x="41.3" y="92.5" width="10.7" height="7.3" fill="#3a4232" opacity="0.8"/><rect x="92.9" y="94.6" width="4.3" height="6.4" fill="#2e3428" opacity="0.8"/><rect x="71.9" y="90.5" width="5.1" height="8.6" fill="#2e3428" opacity="0.8"/><rect x="43.9" y="79.0" width="9.6" height="9.0" fill="#3a4232" opacity="0.8"/><rect x="108.5" y="103.3" width="11.7" height="6.6" fill="#2e3428" opacity="0.8"/><path d="M55 116 C60 104 80 98 100 102 C110 104 116 110 118 116Z" fill="#4e3818" opacity="0.9"/><path d="M70 116 C76 108 92 106 104 110 L106 116Z" fill="#2a1e10" opacity="0.7"/><rect x="110" y="78" width="8" height="38" fill="#7a7872" opacity="0.7"/></g><path d="M208.4 116 L202.6 84 L249 78.8" fill="none" stroke="#e0c820" stroke-width="1.6"/><path d="M338 78 L339.3 94" stroke="#f6e620" stroke-width="1.8"/><circle cx="198.8" cy="105.4" r="3.6" fill="#dcb020"/><path d="M195.5 107 L198.8 112 L202.1 107Z" fill="#dcb020"/><circle cx="198.8" cy="105.4" r="1.2" fill="#f4e8b0"/><circle cx="289.7" cy="113.8" r="3.6" fill="#0e8a76"/><circle cx="289.7" cy="113.8" r="1.5" fill="#e8f4f0"/><rect x="0" y="78" width="340" height="38" fill="rgba(0,0,0,0.15)"/><rect x="0" y="115.4" width="340" height="0.8" fill="rgba(20,20,20,0.8)"/></svg>
<div class="abs" style="left:9.5px;top:90px;font-size:13px;line-height:15px;color:#fff;white-space:pre;letter-spacing:0.25px">Kleos 2022</div>
<div class="abs" style="left:88.2px;top:90px;font-size:13px;line-height:15px;color:#fff;white-space:pre;letter-spacing:0.25px">//</div>
<div class="abs" style="left:102.8px;top:90px;font-size:13px;line-height:15px;color:#fff;white-space:pre;letter-spacing:0.14px">Plaza Lucero / María 2</div>

<div id="nav"></div>
<div style="position:absolute;top:117px;left:340.00px;width:79.3px;height:80px;background:#4f6d8c"></div><div style="position:absolute;top:117px;left:425.80px;width:79.7px;height:80px;background:#2b8a80"></div><div style="position:absolute;top:117px;left:511.63px;width:79.7px;height:80px;background:#879033"></div><div style="position:absolute;top:117px;left:597.46px;width:79.7px;height:80px;background:#8c5e30"></div><div style="position:absolute;top:117px;left:683.29px;width:79.7px;height:80px;background:#8f3660"></div><div style="position:absolute;top:117px;left:769.12px;width:79.7px;height:80px;background:#734880"></div><div style="position:absolute;top:117px;left:854.95px;width:79.7px;height:80px;background:#6a5a7b"></div><div style="position:absolute;top:117px;left:940.78px;width:79.7px;height:80px;background:#555276"></div>
<!-- nav items -->
<svg class="abs" style="left:355px;top:90px" width="16" height="16" viewBox="0 0 16 16"><rect x="1.4" y="1.1" width="12.8" height="12.6" rx="0.8" fill="none" stroke="#cfcfcf" stroke-width="1.5"/><g fill="#cfcfcf"><circle cx="4.3" cy="4.3" r="0.9"/><circle cx="4.3" cy="7.5" r="0.9"/><circle cx="4.3" cy="10.8" r="0.9"/><rect x="6.6" y="3.6" width="5" height="1.4"/><rect x="6.6" y="6.8" width="5" height="1.4"/><rect x="6.6" y="10.1" width="5" height="1.4"/></g></svg>
<div class="nv" style="left:378.2px">Info</div>
<svg class="abs" style="left:424px;top:86px" width="26" height="22" viewBox="0 0 26 22"><path d="M3.3 12.4 L7.8 11.9 L8.4 7.8 L9 14.3 L9.6 5.2 L10.5 17.6 L11.6 8.6 L13.2 14.8 L14 10.6 L15.4 13.6 L16.5 11.3 L17.5 12.8 L18.5 11.3 L19.5 12.6 L21.8 12.4" fill="none" stroke="#6cc42b" stroke-width="1.25" stroke-linejoin="round" stroke-linecap="round"/></svg>
<div class="nv" style="left:451.6px;color:#6cc42b">Sonidos</div>
<svg class="abs" style="left:524px;top:86px" width="26" height="22" viewBox="0 0 26 22"><path d="M4.5 5.3 L10.3 7.6 L14.8 4.8 L20.6 7.4 L20.6 18 L14.8 15.7 L10.3 18.5 L4.5 15.9 Z" fill="#c8c8c8" stroke="#c8c8c8" stroke-width="1.3" stroke-linejoin="round"/><path d="M11.5 9 L13.6 7.7 L13.6 15.1 L11.5 16.5 Z" fill="#333"/></svg>
<div class="nv" style="left:551.2px">Mapa</div>
<svg class="abs" style="left:612px;top:89px" width="18" height="18" viewBox="0 0 18 18"><circle cx="8.8" cy="8.5" r="7.2" fill="none" stroke="#cfcfcf" stroke-width="1.5"/><path d="M7 5.4 L12 8.5 L7 11.6Z" fill="#cfcfcf"/></svg>
<div class="nv" style="left:636.8px">Tocar</div>
<div class="nv" style="left:861px;top:90px;color:#fff;font-size:12.6px">ES</div>
<div class="nv" style="left:890.5px;top:90px;color:#626262;font-size:12.6px">EN</div>
<svg class="abs" style="left:922px;top:89px" width="18" height="18" viewBox="0 0 18 18"><circle cx="9.1" cy="9" r="6.3" fill="none" stroke="#5c5c5c" stroke-width="3"/><path d="M15.21 10.52 A6.3 6.3 0 0 1 6.14 14.56" fill="none" stroke="#cdcdcd" stroke-width="2.9" stroke-linecap="round"/></svg>
<div class="abs" style="left:948.8px;top:91px;font-size:11px;line-height:12px;color:#fff;white-space:pre;-webkit-text-stroke:0.3px #fff">48 / 25</div>
<svg class="abs" style="left:995px;top:89px" width="18" height="18" viewBox="0 0 18 18"><circle cx="9" cy="8.5" r="7.3" fill="none" stroke="#777" stroke-width="1.4"/><circle cx="9" cy="6.6" r="2.6" fill="none" stroke="#777" stroke-width="1.4"/><path d="M3.8 13.6 C5 11 13 11 14.2 13.6" fill="none" stroke="#777" stroke-width="1.4"/></svg>

<!-- help -->
<svg class="abs" style="left:352.1px;top:215.8px" width="20" height="20" viewBox="-10 -10 20 20"><circle cx="0" cy="0" r="7.9" fill="#747474"/><path d="M-2.6 -2.4 C-2.6 -4.2 -1.4 -5.2 0.2 -5.2 C1.8 -5.2 2.9 -4.1 2.9 -2.7 C2.9 -1.3 2 -0.6 1.2 0 C0.3 0.6 -0.1 1.2 -0.1 2.3" fill="none" stroke="#3e3e3e" stroke-width="1.45" stroke-linecap="round"/><circle cx="-0.1" cy="4.9" r="0.95" fill="#3e3e3e"/></svg>
<div class="abs" style="left:378.4px;top:210px;font-size:11.85px;line-height:16px;color:#f0f0f0;white-space:pre">Los sonidos se organizan en pistas. Haz click en el nombre de la pista para ver o añadir sonidos. Arrastra las pistas
para cambiar el orden.</div>
<div class="tr" style="top:254px;background:#50739a"><div class="th" style="background:#70b4fa"><svg width="16" height="13" viewBox="0 0 16 13" style="position:absolute;left:15px;top:16.5px"><g stroke="#000" stroke-width="1.6" stroke-linecap="round"><line x1="0.8" y1="1.2" x2="14.8" y2="1.2"/><line x1="0.8" y1="4.4" x2="14.8" y2="4.4"/><line x1="0.8" y1="7.6" x2="14.8" y2="7.6"/><line x1="0.8" y1="10.8" x2="14.8" y2="10.8"/></g></svg></div><span class="tl" style="letter-spacing:-0.1px">entrevistas 5A</span></div>
<div class="tr" style="top:302px;background:#20978a"><div class="th" style="background:#22ffe5"><svg width="16" height="13" viewBox="0 0 16 13" style="position:absolute;left:15px;top:16.5px"><g stroke="#000" stroke-width="1.6" stroke-linecap="round"><line x1="0.8" y1="1.2" x2="14.8" y2="1.2"/><line x1="0.8" y1="4.4" x2="14.8" y2="4.4"/><line x1="0.8" y1="7.6" x2="14.8" y2="7.6"/><line x1="0.8" y1="10.8" x2="14.8" y2="10.8"/></g></svg></div><span class="tl" style="letter-spacing:-0.1px">entrevistas 5A</span></div>
<div class="tr" style="top:350px;background:#909a2a"><div class="th" style="background:#eeff33"><svg width="16" height="13" viewBox="0 0 16 13" style="position:absolute;left:15px;top:16.5px"><g stroke="#000" stroke-width="1.6" stroke-linecap="round"><line x1="0.8" y1="1.2" x2="14.8" y2="1.2"/><line x1="0.8" y1="4.4" x2="14.8" y2="4.4"/><line x1="0.8" y1="7.6" x2="14.8" y2="7.6"/><line x1="0.8" y1="10.8" x2="14.8" y2="10.8"/></g></svg></div><span class="tl" style="letter-spacing:-0.35px">Musica 6_A</span></div>
<div class="tr" style="top:398px;background:#955f25"><div class="th" style="background:#ff9427"><svg width="16" height="13" viewBox="0 0 16 13" style="position:absolute;left:15px;top:16.5px"><g stroke="#000" stroke-width="1.6" stroke-linecap="round"><line x1="0.8" y1="1.2" x2="14.8" y2="1.2"/><line x1="0.8" y1="4.4" x2="14.8" y2="4.4"/><line x1="0.8" y1="7.6" x2="14.8" y2="7.6"/><line x1="0.8" y1="10.8" x2="14.8" y2="10.8"/></g></svg></div><span class="tl" style="letter-spacing:-0.35px">Musica 6_A</span></div>
<div class="tr" style="top:446px;background:#983862"><div class="th" style="background:#ff3c96"><svg width="16" height="13" viewBox="0 0 16 13" style="position:absolute;left:15px;top:16.5px"><g stroke="#000" stroke-width="1.6" stroke-linecap="round"><line x1="0.8" y1="1.2" x2="14.8" y2="1.2"/><line x1="0.8" y1="4.4" x2="14.8" y2="4.4"/><line x1="0.8" y1="7.6" x2="14.8" y2="7.6"/><line x1="0.8" y1="10.8" x2="14.8" y2="10.8"/></g></svg></div><span class="tl" style="letter-spacing:-0.35px">Musica 6_A</span></div>
<div class="tr" style="top:494px;background:#7b4987"><div class="th" style="background:#bb55d4"><svg width="16" height="13" viewBox="0 0 16 13" style="position:absolute;left:15px;top:16.5px"><g stroke="#000" stroke-width="1.6" stroke-linecap="round"><line x1="0.8" y1="1.2" x2="14.8" y2="1.2"/><line x1="0.8" y1="4.4" x2="14.8" y2="4.4"/><line x1="0.8" y1="7.6" x2="14.8" y2="7.6"/><line x1="0.8" y1="10.8" x2="14.8" y2="10.8"/></g></svg></div><span class="tl" style="letter-spacing:-0.35px">Musica 6_B</span></div>
<div class="tr" style="top:542px;background:#6c5e81"><div class="th" style="background:#a78bd4"><svg width="16" height="13" viewBox="0 0 16 13" style="position:absolute;left:15px;top:16.5px"><g stroke="#000" stroke-width="1.6" stroke-linecap="round"><line x1="0.8" y1="1.2" x2="14.8" y2="1.2"/><line x1="0.8" y1="4.4" x2="14.8" y2="4.4"/><line x1="0.8" y1="7.6" x2="14.8" y2="7.6"/><line x1="0.8" y1="10.8" x2="14.8" y2="10.8"/></g></svg></div><span class="tl" style="letter-spacing:-0.35px">Musica 6_B</span></div>
<div class="tr" style="top:590px;background:#56577f"><div class="th" style="background:#7a7bcc"><svg width="16" height="13" viewBox="0 0 16 13" style="position:absolute;left:15px;top:16.5px"><g stroke="#000" stroke-width="1.6" stroke-linecap="round"><line x1="0.8" y1="1.2" x2="14.8" y2="1.2"/><line x1="0.8" y1="4.4" x2="14.8" y2="4.4"/><line x1="0.8" y1="7.6" x2="14.8" y2="7.6"/><line x1="0.8" y1="10.8" x2="14.8" y2="10.8"/></g></svg></div><span class="tl" style="letter-spacing:-0.35px">Musica 6_B</span></div>
<div class="abs" style="left:0;top:8px;width:1px;height:1005px;background:rgba(255,255,255,0.13)"></div>
</body></html>
